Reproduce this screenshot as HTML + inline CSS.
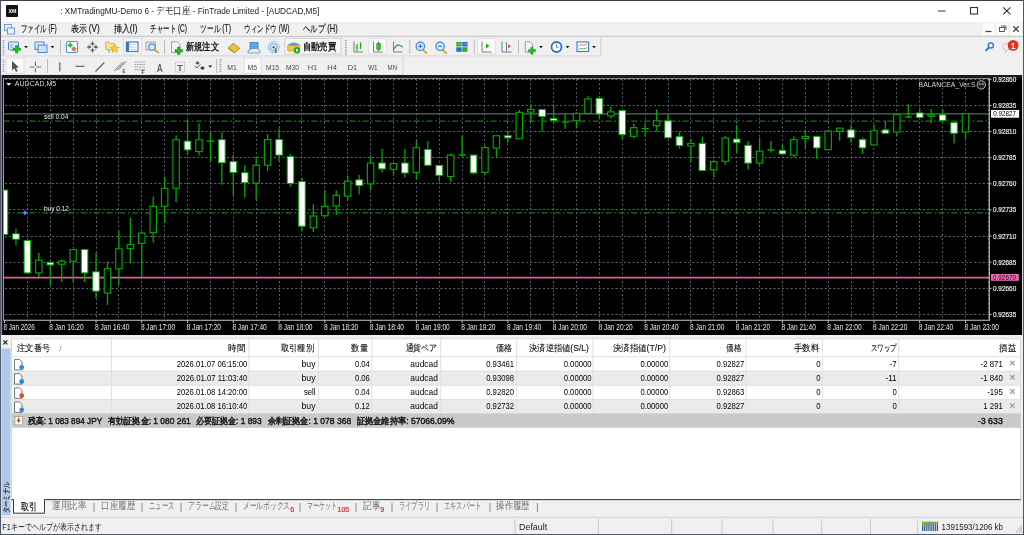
<!DOCTYPE html>
<html><head><meta charset="utf-8"><style>
html,body{margin:0;padding:0;width:1024px;height:535px;overflow:hidden;background:#f0f0f0;}
svg{display:block;font-family:"Liberation Sans", sans-serif;will-change:transform;}
</style></head><body>
<svg width="1024" height="535" viewBox="0 0 1024 535">
<rect x="0.00" y="0.00" width="1024.00" height="535.00" fill="#f0f0f0"/>
<rect x="0.00" y="0.00" width="1024.00" height="22.00" fill="#ffffff"/>
<line x1="0.00" y1="0.50" x2="1024.00" y2="0.50" stroke="#3c4048" stroke-width="1"/>
<rect x="6.00" y="5.00" width="12.00" height="12.00" fill="#111111" rx="1"/>
<text x="12.50" y="13.20" font-size="5.5" fill="#ffffff" text-anchor="middle" font-weight="bold" textLength="8.00" lengthAdjust="spacingAndGlyphs">XM</text>
<text x="60.30" y="14.30" font-size="9.6" fill="#1a1a1a" text-anchor="start" font-weight="normal" textLength="259.00" lengthAdjust="spacingAndGlyphs">: XMTradingMU-Demo 6 - デモ口座 - FinTrade Limited - [AUDCAD,M5]</text>
<line x1="938.00" y1="11.00" x2="945.50" y2="11.00" stroke="#333" stroke-width="1"/>
<rect x="970.50" y="7.50" width="7.00" height="6.50" fill="none" stroke="#333" stroke-width="1.1"/>
<line x1="1003.20" y1="7.30" x2="1010.50" y2="14.30" stroke="#333" stroke-width="1.1"/>
<line x1="1010.50" y1="7.30" x2="1003.20" y2="14.30" stroke="#333" stroke-width="1.1"/>
<rect x="1.00" y="22.00" width="1022.00" height="14.00" fill="#f0f0f0"/>
<rect x="4.50" y="24.50" width="7.00" height="6.00" fill="#eaf2fb" stroke="#5b8fd8" stroke-width="0.9"/>
<rect x="7.50" y="28.00" width="7.00" height="6.00" fill="#eaf2fb" stroke="#5b8fd8" stroke-width="0.9"/>
<text x="20.90" y="32.30" font-size="10.2" fill="#111111" text-anchor="start" font-weight="normal" textLength="35.90" lengthAdjust="spacingAndGlyphs" stroke="#111" stroke-width="0.15">ファイル (F)</text>
<text x="70.60" y="32.30" font-size="10.2" fill="#111111" text-anchor="start" font-weight="normal" textLength="29.10" lengthAdjust="spacingAndGlyphs" stroke="#111" stroke-width="0.15">表示 (V)</text>
<text x="113.50" y="32.30" font-size="10.2" fill="#111111" text-anchor="start" font-weight="normal" textLength="24.00" lengthAdjust="spacingAndGlyphs" stroke="#111" stroke-width="0.15">挿入(I)</text>
<text x="150.30" y="32.30" font-size="10.2" fill="#111111" text-anchor="start" font-weight="normal" textLength="36.70" lengthAdjust="spacingAndGlyphs" stroke="#111" stroke-width="0.15">チャート (C)</text>
<text x="200.40" y="32.30" font-size="10.2" fill="#111111" text-anchor="start" font-weight="normal" textLength="30.60" lengthAdjust="spacingAndGlyphs" stroke="#111" stroke-width="0.15">ツール (T)</text>
<text x="244.40" y="32.30" font-size="10.2" fill="#111111" text-anchor="start" font-weight="normal" textLength="45.10" lengthAdjust="spacingAndGlyphs" stroke="#111" stroke-width="0.15">ウィンドウ (W)</text>
<text x="302.90" y="32.30" font-size="10.2" fill="#111111" text-anchor="start" font-weight="normal" textLength="34.80" lengthAdjust="spacingAndGlyphs" stroke="#111" stroke-width="0.15">ヘルプ (H)</text>
<rect x="983.00" y="23.50" width="11.40" height="11.80" fill="#ffffff"/>
<rect x="996.60" y="23.50" width="11.40" height="11.80" fill="#ffffff"/>
<rect x="1010.50" y="23.50" width="11.00" height="11.80" fill="#ffffff"/>
<line x1="985.50" y1="31.50" x2="991.50" y2="31.50" stroke="#3a4a66" stroke-width="1.3"/>
<rect x="999.50" y="27.50" width="5.00" height="4.00" fill="none" stroke="#3a4a66" stroke-width="0.9"/>
<line x1="1001.00" y1="26.00" x2="1006.00" y2="26.00" stroke="#3a4a66" stroke-width="0.9"/>
<line x1="1006.00" y1="26.00" x2="1006.00" y2="30.00" stroke="#3a4a66" stroke-width="0.9"/>
<line x1="1013.30" y1="26.30" x2="1018.70" y2="31.70" stroke="#3a4a66" stroke-width="1.4"/>
<line x1="1018.70" y1="26.30" x2="1013.30" y2="31.70" stroke="#3a4a66" stroke-width="1.4"/>
<line x1="1.00" y1="36.30" x2="1023.00" y2="36.30" stroke="#c4c4c4" stroke-width="1"/>
<line x1="1.00" y1="55.90" x2="600.60" y2="55.90" stroke="#d6d6d6" stroke-width="1"/>
<line x1="600.60" y1="38.00" x2="600.60" y2="56.00" stroke="#d6d6d6" stroke-width="1"/>
<rect x="2.60" y="40.00" width="1.70" height="1.30" fill="#a0a0a0"/>
<rect x="2.60" y="42.30" width="1.70" height="1.30" fill="#a0a0a0"/>
<rect x="2.60" y="44.60" width="1.70" height="1.30" fill="#a0a0a0"/>
<rect x="2.60" y="46.90" width="1.70" height="1.30" fill="#a0a0a0"/>
<rect x="2.60" y="49.20" width="1.70" height="1.30" fill="#a0a0a0"/>
<rect x="2.60" y="51.50" width="1.70" height="1.30" fill="#a0a0a0"/>
<rect x="2.60" y="53.80" width="1.70" height="1.30" fill="#a0a0a0"/>
<rect x="8.50" y="42.00" width="10.00" height="8.00" fill="#dfeeff" stroke="#4f86cf" stroke-width="1" rx="1"/>
<line x1="10.00" y1="45.00" x2="13.00" y2="45.00" stroke="#6a8fc0" stroke-width="0.8"/>
<line x1="10.00" y1="47.00" x2="13.00" y2="47.00" stroke="#6a8fc0" stroke-width="0.8"/>
<path d="M15.5,45.5 h2.4 v2.6 h2.6 v2.4 h-2.6 v2.6 h-2.4 v-2.6 h-2.6 v-2.4 h2.6 z" fill="#22c022" stroke="#118811" stroke-width="0.5"/>
<path d="M24.2,46 h3.6 l-1.8,2.2 z" fill="#111111"/>
<rect x="35.00" y="42.00" width="9.00" height="7.50" fill="#e6f0fb" stroke="#4f86cf" stroke-width="1"/>
<rect x="38.00" y="45.00" width="9.00" height="7.50" fill="#cfe0f4" stroke="#4f86cf" stroke-width="1"/>
<path d="M50.7,46 h3.6 l-1.8,2.2 z" fill="#111111"/>
<line x1="60.40" y1="40.00" x2="60.40" y2="54.00" stroke="#bcbcbc" stroke-width="1"/>
<rect x="66.50" y="41.50" width="11.00" height="11.00" fill="#ffffff" stroke="#5b93d6" stroke-width="1.2" rx="1.5"/>
<path d="M70.2,42.8 l2.4,2.4 l-2.4,2.4 l-2.4,-2.4 z" fill="#3cbf3c" stroke="#1d8a1d" stroke-width="0.5"/>
<path d="M73.9,46.6 l2.4,2.4 l-2.4,2.4 l-2.4,-2.4 z" fill="#f2793a" stroke="#c04a10" stroke-width="0.5"/>
<path d="M92.5,42 L97.8,47 L92.5,52.2 L87.2,47 Z" fill="none" stroke="#8a8a8a" stroke-width="0.8"/>
<path d="M92.5,41.6 L93.8,44 L92.5,46.3 L91.2,44 Z M92.5,52.6 L93.8,50 L92.5,47.7 L91.2,50 Z M86.8,47 L89.4,45.7 L91.8,47 L89.4,48.3 Z M98.2,47 L95.6,45.7 L93.2,47 L95.6,48.3 Z" fill="#5e5e5e"/>
<rect x="108.30" y="49.00" width="1.60" height="3.80" fill="#b8b8b8"/>
<path d="M105.8,42.2 h3.6 l1,1.2 h3.8 v6.3 h-8.4 z" fill="#f7e68a" stroke="#c9a640" stroke-width="0.8"/>
<path d="M114.8,44.3 l1.25,2.7 l2.9,0.35 l-2.15,1.95 l0.6,2.85 l-2.6,-1.45 l-2.6,1.45 l0.6,-2.85 l-2.15,-1.95 l2.9,-0.35 z" fill="#f7d43a" stroke="#c99a10" stroke-width="0.6"/>
<rect x="123.50" y="38.20" width="18.10" height="15.80" fill="#f9f9f9" stroke="#dcdcdc" stroke-width="0.9"/>
<rect x="126.40" y="42.00" width="11.60" height="9.50" fill="#ffffff" stroke="#3b78c8" stroke-width="1.2"/>
<rect x="126.40" y="42.00" width="2.60" height="9.50" fill="#3b78c8"/>
<line x1="130.50" y1="44.50" x2="136.50" y2="44.50" stroke="#b0c8e8" stroke-width="0.8"/>
<line x1="130.50" y1="47.00" x2="136.50" y2="47.00" stroke="#b0c8e8" stroke-width="0.8"/>
<line x1="130.50" y1="49.50" x2="136.50" y2="49.50" stroke="#b0c8e8" stroke-width="0.8"/>
<rect x="129.50" y="43.80" width="1.00" height="1.00" fill="#e04040"/>
<rect x="129.50" y="46.30" width="1.00" height="1.00" fill="#e04040"/>
<rect x="146.00" y="42.00" width="9.50" height="8.00" fill="#ece8e0" stroke="#9a9a9a" stroke-width="0.8"/>
<circle cx="152.00" cy="47.00" r="3.20" fill="#d6e8fb" stroke="#5a90d0" stroke-width="1.2"/>
<line x1="154.30" y1="49.50" x2="158.80" y2="53.00" stroke="#d4a020" stroke-width="1.6"/>
<line x1="164.50" y1="40.00" x2="164.50" y2="54.00" stroke="#bcbcbc" stroke-width="1"/>
<path d="M171.5,41.8 h6 l2.5,2.5 v8.2 h-8.5 z" fill="#f4f4f4" stroke="#8a8a8a" stroke-width="0.8"/>
<path d="M177.6,47 h2.4 v2.6 h2.6 v2.4 h-2.6 v2.6 h-2.4 v-2.6 h-2.6 v-2.4 h2.6 z" fill="#22c022" stroke="#118811" stroke-width="0.5"/>
<text x="185.60" y="50.40" font-size="10.2" fill="#111111" text-anchor="start" font-weight="normal" textLength="33.40" lengthAdjust="spacingAndGlyphs" stroke="#111" stroke-width="0.35">新規注文</text>
<path d="M228.3,47.8 L233.2,43.3 L239.8,48.2 L234.8,52.6 Z" fill="#f0c23a" stroke="#9a7010" stroke-width="0.7"/>
<path d="M228.3,47.8 L234.8,52.6 L234.8,53.6 L228.3,48.9 Z" fill="#b8860b"/>
<rect x="250.00" y="42.50" width="8.00" height="7.00" fill="#5aa8ea" stroke="#2c78c0" stroke-width="0.7"/>
<path d="M248,53 q-1,-3 2,-3 q1,-2 4,-1.5 q3,-1 5,1.5 q2,0 1,3 z" fill="#e4eef8" stroke="#6a8aaa" stroke-width="0.8"/>
<circle cx="273.70" cy="47.30" r="5.50" fill="none" stroke="#9ab8d8" stroke-width="1"/>
<circle cx="273.70" cy="47.30" r="3.50" fill="none" stroke="#7aa0c8" stroke-width="1"/>
<circle cx="273.70" cy="47.30" r="1.30" fill="#3a78c0"/>
<line x1="275.70" y1="48.30" x2="275.70" y2="53.00" stroke="#2aa02a" stroke-width="1.6"/>
<rect x="285.00" y="38.20" width="56.00" height="15.80" fill="#f7f7f7" stroke="#c9c9c9" stroke-width="0.9"/>
<path d="M287.8,45 q6,-4 12,0 v6 h-12 z" fill="#f2c640" stroke="#b08a10" stroke-width="0.6"/>
<path d="M287.8,45 q6,-5 12,0 q-6,2 -12,0 z" fill="#5aa0dc"/>
<circle cx="297.00" cy="50.30" r="3.20" fill="#22aa22"/>
<path d="M296,48.5 l2.6,1.8 l-2.6,1.8 z" fill="#ffffff"/>
<text x="302.60" y="50.40" font-size="10.2" fill="#111111" text-anchor="start" font-weight="normal" textLength="33.40" lengthAdjust="spacingAndGlyphs" stroke="#111" stroke-width="0.35">自動売買</text>
<rect x="345.00" y="40.00" width="1.70" height="1.30" fill="#a0a0a0"/>
<rect x="345.00" y="42.30" width="1.70" height="1.30" fill="#a0a0a0"/>
<rect x="345.00" y="44.60" width="1.70" height="1.30" fill="#a0a0a0"/>
<rect x="345.00" y="46.90" width="1.70" height="1.30" fill="#a0a0a0"/>
<rect x="345.00" y="49.20" width="1.70" height="1.30" fill="#a0a0a0"/>
<rect x="345.00" y="51.50" width="1.70" height="1.30" fill="#a0a0a0"/>
<rect x="345.00" y="53.80" width="1.70" height="1.30" fill="#a0a0a0"/>
<path d="M354,41.5 v10.5 h9" fill="none" stroke="#707070" stroke-width="0.9"/>
<line x1="357.00" y1="44.00" x2="357.00" y2="51.00" stroke="#22a022" stroke-width="1.2"/>
<line x1="360.50" y1="42.50" x2="360.50" y2="49.00" stroke="#22a022" stroke-width="1.2"/>
<line x1="356.00" y1="47.00" x2="357.00" y2="47.00" stroke="#22a022" stroke-width="1"/>
<line x1="360.50" y1="45.00" x2="361.50" y2="45.00" stroke="#22a022" stroke-width="1"/>
<rect x="368.80" y="38.20" width="17.60" height="15.80" fill="#f9f9f9" stroke="#dcdcdc" stroke-width="0.9"/>
<path d="M373.5,41.5 v10.5 h9" fill="none" stroke="#707070" stroke-width="0.9"/>
<line x1="378.50" y1="41.50" x2="378.50" y2="51.00" stroke="#1a8a1a" stroke-width="0.9"/>
<rect x="376.80" y="43.50" width="3.50" height="6.00" fill="#30c030" stroke="#1a8a1a" stroke-width="0.6"/>
<path d="M393.5,41.5 v10.5 h9" fill="none" stroke="#707070" stroke-width="0.9"/>
<path d="M394,49 q3,-5 5,-4 t4,2" fill="none" stroke="#22a022" stroke-width="1.1"/>
<line x1="409.80" y1="40.00" x2="409.80" y2="54.00" stroke="#bcbcbc" stroke-width="1"/>
<line x1="422.50" y1="49.30" x2="426.80" y2="53.50" stroke="#d8a820" stroke-width="1.8"/>
<circle cx="420.30" cy="46.30" r="4.20" fill="#dcecfc" stroke="#3a80d0" stroke-width="1.2"/>
<line x1="418.30" y1="46.30" x2="422.30" y2="46.30" stroke="#2a6ac0" stroke-width="1.1"/>
<line x1="420.30" y1="44.30" x2="420.30" y2="48.30" stroke="#2a6ac0" stroke-width="1.1"/>
<line x1="442.30" y1="49.30" x2="446.60" y2="53.50" stroke="#d8a820" stroke-width="1.8"/>
<circle cx="440.10" cy="46.30" r="4.20" fill="#dcecfc" stroke="#3a80d0" stroke-width="1.2"/>
<line x1="438.10" y1="46.30" x2="442.10" y2="46.30" stroke="#2a6ac0" stroke-width="1.1"/>
<rect x="456.30" y="42.00" width="5.30" height="4.50" fill="#34a834"/>
<rect x="462.20" y="42.00" width="5.30" height="4.50" fill="#2a6acc"/>
<rect x="456.30" y="47.30" width="5.30" height="4.50" fill="#2a6acc"/>
<rect x="462.20" y="47.30" width="5.30" height="4.50" fill="#34a834"/>
<line x1="457.50" y1="44.00" x2="460.50" y2="44.00" stroke="#d8f0d8" stroke-width="0.6"/>
<line x1="463.50" y1="44.00" x2="466.50" y2="44.00" stroke="#d8e8f8" stroke-width="0.6"/>
<line x1="474.30" y1="40.00" x2="474.30" y2="54.00" stroke="#bcbcbc" stroke-width="1"/>
<rect x="477.50" y="38.20" width="17.80" height="15.80" fill="#f9f9f9" stroke="#dcdcdc" stroke-width="0.9"/>
<path d="M482,41.5 v10.5 h9.5" fill="none" stroke="#707070" stroke-width="0.9"/>
<path d="M486,43.5 l3.5,2.5 l-3.5,2.5 z" fill="#22aa22"/>
<path d="M502,41.5 v10.5 h9.5" fill="none" stroke="#707070" stroke-width="0.9"/>
<line x1="506.50" y1="42.00" x2="506.50" y2="51.00" stroke="#3a78c0" stroke-width="0.9"/>
<path d="M508,44.3 l3,2 l-3,2 z" fill="#e05030"/>
<line x1="518.50" y1="40.00" x2="518.50" y2="54.00" stroke="#bcbcbc" stroke-width="1"/>
<path d="M525.3,41.8 h5 l2.3,2.3 v8 h-7.3 z" fill="#f4f4f4" stroke="#8a8a8a" stroke-width="0.8"/>
<path d="M530.8,47.2 h2.2 v2.4 h2.4 v2.2 h-2.4 v2.4 h-2.2 v-2.4 h-2.4 v-2.2 h2.4 z" fill="#22c022" stroke="#118811" stroke-width="0.5"/>
<path d="M539.2,46 h3.6 l-1.8,2.2 z" fill="#111111"/>
<circle cx="556.50" cy="47.00" r="5.00" fill="#ffffff" stroke="#2a70c8" stroke-width="1.8"/>
<line x1="556.50" y1="47.00" x2="556.50" y2="44.50" stroke="#333" stroke-width="0.7"/>
<line x1="556.50" y1="47.00" x2="558.50" y2="47.50" stroke="#333" stroke-width="0.7"/>
<path d="M565.8000000000001,46 h3.6 l-1.8,2.2 z" fill="#111111"/>
<rect x="577.00" y="42.00" width="11.60" height="9.50" fill="#ffffff" stroke="#3b78c8" stroke-width="1.1"/>
<path d="M578.5,46 l2.5,-1.5 l2.5,0.8 l3.5,-1.5" fill="none" stroke="#d06030" stroke-width="0.8"/>
<path d="M578.5,49.5 l2.5,-1.2 l2.5,0.8 l3.5,-1.2" fill="none" stroke="#40a040" stroke-width="0.8"/>
<path d="M592.2,46 h3.6 l-1.8,2.2 z" fill="#111111"/>
<circle cx="990.80" cy="45.40" r="2.60" fill="none" stroke="#2f6fd0" stroke-width="1.3"/>
<line x1="988.80" y1="47.60" x2="985.50" y2="50.80" stroke="#2f6fd0" stroke-width="1.8"/>
<path d="M1002.8,46.5 q0,-3 5,-3 q5,0 5,3 q0,3 -5,3 l-2.5,3 l0.5,-3 q-3,-0.5 -3,-3 z" fill="#f2f2f2" stroke="#b8b8b8" stroke-width="0.8"/>
<circle cx="1013.10" cy="45.40" r="5.40" fill="#e0301e"/>
<text x="1013.10" y="48.60" font-size="8.5" fill="#ffffff" text-anchor="middle" font-weight="bold">1</text>
<line x1="1.00" y1="75.00" x2="403.00" y2="75.00" stroke="#d6d6d6" stroke-width="1"/>
<line x1="403.00" y1="57.00" x2="403.00" y2="75.00" stroke="#d6d6d6" stroke-width="1"/>
<rect x="2.60" y="59.30" width="1.70" height="1.30" fill="#a0a0a0"/>
<rect x="2.60" y="61.60" width="1.70" height="1.30" fill="#a0a0a0"/>
<rect x="2.60" y="63.90" width="1.70" height="1.30" fill="#a0a0a0"/>
<rect x="2.60" y="66.20" width="1.70" height="1.30" fill="#a0a0a0"/>
<rect x="2.60" y="68.50" width="1.70" height="1.30" fill="#a0a0a0"/>
<rect x="2.60" y="70.80" width="1.70" height="1.30" fill="#a0a0a0"/>
<rect x="6.30" y="58.00" width="17.70" height="15.30" fill="#f9f9f9" stroke="#dcdcdc" stroke-width="0.9"/>
<path d="M12,61 L12,70.5 L14.3,68.3 L16,72 L17.6,71.2 L16,67.8 L19,67.5 Z" fill="#505050"/>
<line x1="29.90" y1="67.00" x2="41.00" y2="67.00" stroke="#6a6a6a" stroke-width="1"/>
<line x1="35.40" y1="61.80" x2="35.40" y2="72.20" stroke="#6a6a6a" stroke-width="1"/>
<rect x="34.40" y="66.00" width="2.00" height="2.00" fill="#f0f0f0"/>
<line x1="47.50" y1="59.00" x2="47.50" y2="73.00" stroke="#bcbcbc" stroke-width="1"/>
<line x1="59.80" y1="62.20" x2="59.80" y2="71.60" stroke="#606060" stroke-width="1.2"/>
<line x1="75.60" y1="66.30" x2="84.40" y2="66.30" stroke="#606060" stroke-width="1.2"/>
<line x1="95.50" y1="71.50" x2="104.30" y2="62.50" stroke="#606060" stroke-width="1.1"/>
<line x1="114.30" y1="71.00" x2="122.00" y2="62.50" stroke="#707070" stroke-width="0.8"/>
<line x1="116.50" y1="70.34" x2="124.20" y2="61.84" stroke="#707070" stroke-width="0.8"/>
<line x1="118.70" y1="69.68" x2="126.40" y2="61.18" stroke="#707070" stroke-width="0.8"/>
<text x="122.50" y="73.00" font-size="4.5" fill="#444" text-anchor="start" font-weight="bold">E</text>
<line x1="134.60" y1="62.00" x2="145.00" y2="62.00" stroke="#8a8a8a" stroke-width="0.8" stroke-dasharray="1.5 0.7"/>
<line x1="134.60" y1="64.50" x2="145.00" y2="64.50" stroke="#8a8a8a" stroke-width="0.8" stroke-dasharray="1.5 0.7"/>
<line x1="134.60" y1="67.00" x2="145.00" y2="67.00" stroke="#8a8a8a" stroke-width="0.8" stroke-dasharray="1.5 0.7"/>
<line x1="134.60" y1="69.50" x2="145.00" y2="69.50" stroke="#8a8a8a" stroke-width="0.8" stroke-dasharray="1.5 0.7"/>
<text x="141.50" y="73.50" font-size="5" fill="#444" text-anchor="start" font-weight="bold">F</text>
<text x="159.80" y="71.50" font-size="10" fill="#666666" text-anchor="middle" font-weight="bold" textLength="6.00" lengthAdjust="spacingAndGlyphs">A</text>
<rect x="175.50" y="62.00" width="9.00" height="10.00" fill="none" stroke="#999" stroke-width="0.7" stroke-dasharray="1 0.8"/>
<text x="180.00" y="70.60" font-size="9" fill="#666666" text-anchor="middle" font-weight="bold" textLength="6.00" lengthAdjust="spacingAndGlyphs">T</text>
<path d="M195.5,63 l2,-1.8 l2,1.8 l-2,1.8 z" fill="#444"/>
<path d="M200,68 l2.5,-2 l2.5,2 l-2.5,2 z" fill="#444"/>
<path d="M195,66 l1.8,2 l3.5,-3.5" fill="none" stroke="#444" stroke-width="0.9"/>
<path d="M208.39999999999998,65.5 h3.6 l-1.8,2.2 z" fill="#111111"/>
<line x1="216.70" y1="59.00" x2="216.70" y2="73.00" stroke="#bcbcbc" stroke-width="1"/>
<rect x="219.60" y="59.30" width="1.70" height="1.30" fill="#a0a0a0"/>
<rect x="219.60" y="61.60" width="1.70" height="1.30" fill="#a0a0a0"/>
<rect x="219.60" y="63.90" width="1.70" height="1.30" fill="#a0a0a0"/>
<rect x="219.60" y="66.20" width="1.70" height="1.30" fill="#a0a0a0"/>
<rect x="219.60" y="68.50" width="1.70" height="1.30" fill="#a0a0a0"/>
<rect x="219.60" y="70.80" width="1.70" height="1.30" fill="#a0a0a0"/>
<rect x="244.00" y="58.00" width="17.20" height="15.30" fill="#f9f9f9" stroke="#dcdcdc" stroke-width="0.9"/>
<text x="232.00" y="69.60" font-size="7.6" fill="#4a4a4a" text-anchor="middle" font-weight="normal" textLength="9.50" lengthAdjust="spacingAndGlyphs">M1</text>
<text x="252.30" y="69.60" font-size="7.6" fill="#4a4a4a" text-anchor="middle" font-weight="normal" textLength="9.50" lengthAdjust="spacingAndGlyphs">M5</text>
<text x="272.60" y="69.60" font-size="7.6" fill="#4a4a4a" text-anchor="middle" font-weight="normal" textLength="13.00" lengthAdjust="spacingAndGlyphs">M15</text>
<text x="292.40" y="69.60" font-size="7.6" fill="#4a4a4a" text-anchor="middle" font-weight="normal" textLength="13.00" lengthAdjust="spacingAndGlyphs">M30</text>
<text x="312.40" y="69.60" font-size="7.6" fill="#4a4a4a" text-anchor="middle" font-weight="normal" textLength="9.50" lengthAdjust="spacingAndGlyphs">H1</text>
<text x="332.10" y="69.60" font-size="7.6" fill="#4a4a4a" text-anchor="middle" font-weight="normal" textLength="9.50" lengthAdjust="spacingAndGlyphs">H4</text>
<text x="352.50" y="69.60" font-size="7.6" fill="#4a4a4a" text-anchor="middle" font-weight="normal" textLength="9.50" lengthAdjust="spacingAndGlyphs">D1</text>
<text x="372.90" y="69.60" font-size="7.6" fill="#4a4a4a" text-anchor="middle" font-weight="normal" textLength="9.50" lengthAdjust="spacingAndGlyphs">W1</text>
<text x="392.30" y="69.60" font-size="7.6" fill="#4a4a4a" text-anchor="middle" font-weight="normal" textLength="9.50" lengthAdjust="spacingAndGlyphs">MN</text>
<rect x="1.00" y="75.00" width="1021.00" height="260.00" fill="#000000"/>
<line x1="1022.50" y1="75.00" x2="1022.50" y2="335.00" stroke="#dcdcdc" stroke-width="1"/>
<line x1="1.50" y1="75.00" x2="1.50" y2="335.00" stroke="#8a8a8a" stroke-width="1"/>
<rect x="2.00" y="75.00" width="1020.00" height="3.30" fill="#1a1a1a"/>
<rect x="2.00" y="75.00" width="1.30" height="260.00" fill="#1c1c1c"/>
<line x1="3.00" y1="78.50" x2="989.50" y2="78.50" stroke="#8c8c8c" stroke-width="1"/>
<line x1="3.50" y1="78.00" x2="3.50" y2="320.50" stroke="#9a9a9a" stroke-width="1"/>
<line x1="4.85" y1="79.50" x2="988.50" y2="79.50" stroke="#56646f" stroke-width="1" stroke-dasharray="2.2 2.07"/>
<line x1="4.85" y1="105.50" x2="988.50" y2="105.50" stroke="#56646f" stroke-width="1" stroke-dasharray="2.2 2.07"/>
<line x1="4.85" y1="131.50" x2="988.50" y2="131.50" stroke="#56646f" stroke-width="1" stroke-dasharray="2.2 2.07"/>
<line x1="4.85" y1="157.50" x2="988.50" y2="157.50" stroke="#56646f" stroke-width="1" stroke-dasharray="2.2 2.07"/>
<line x1="4.85" y1="183.50" x2="988.50" y2="183.50" stroke="#56646f" stroke-width="1" stroke-dasharray="2.2 2.07"/>
<line x1="4.85" y1="209.50" x2="988.50" y2="209.50" stroke="#56646f" stroke-width="1" stroke-dasharray="2.2 2.07"/>
<line x1="4.85" y1="236.50" x2="988.50" y2="236.50" stroke="#56646f" stroke-width="1" stroke-dasharray="2.2 2.07"/>
<line x1="4.85" y1="262.50" x2="988.50" y2="262.50" stroke="#56646f" stroke-width="1" stroke-dasharray="2.2 2.07"/>
<line x1="4.85" y1="288.50" x2="988.50" y2="288.50" stroke="#56646f" stroke-width="1" stroke-dasharray="2.2 2.07"/>
<line x1="4.85" y1="314.50" x2="988.50" y2="314.50" stroke="#56646f" stroke-width="1" stroke-dasharray="2.2 2.07"/>
<line x1="27.50" y1="79.00" x2="27.50" y2="320.00" stroke="#56646f" stroke-width="1" stroke-dasharray="1.9 2.4"/>
<line x1="50.50" y1="79.00" x2="50.50" y2="320.00" stroke="#56646f" stroke-width="1" stroke-dasharray="1.9 2.4"/>
<line x1="73.50" y1="79.00" x2="73.50" y2="320.00" stroke="#56646f" stroke-width="1" stroke-dasharray="1.9 2.4"/>
<line x1="96.50" y1="79.00" x2="96.50" y2="320.00" stroke="#56646f" stroke-width="1" stroke-dasharray="1.9 2.4"/>
<line x1="118.50" y1="79.00" x2="118.50" y2="320.00" stroke="#56646f" stroke-width="1" stroke-dasharray="1.9 2.4"/>
<line x1="141.50" y1="79.00" x2="141.50" y2="320.00" stroke="#56646f" stroke-width="1" stroke-dasharray="1.9 2.4"/>
<line x1="164.50" y1="79.00" x2="164.50" y2="320.00" stroke="#56646f" stroke-width="1" stroke-dasharray="1.9 2.4"/>
<line x1="187.50" y1="79.00" x2="187.50" y2="320.00" stroke="#56646f" stroke-width="1" stroke-dasharray="1.9 2.4"/>
<line x1="210.50" y1="79.00" x2="210.50" y2="320.00" stroke="#56646f" stroke-width="1" stroke-dasharray="1.9 2.4"/>
<line x1="233.50" y1="79.00" x2="233.50" y2="320.00" stroke="#56646f" stroke-width="1" stroke-dasharray="1.9 2.4"/>
<line x1="256.50" y1="79.00" x2="256.50" y2="320.00" stroke="#56646f" stroke-width="1" stroke-dasharray="1.9 2.4"/>
<line x1="279.50" y1="79.00" x2="279.50" y2="320.00" stroke="#56646f" stroke-width="1" stroke-dasharray="1.9 2.4"/>
<line x1="301.50" y1="79.00" x2="301.50" y2="320.00" stroke="#56646f" stroke-width="1" stroke-dasharray="1.9 2.4"/>
<line x1="324.50" y1="79.00" x2="324.50" y2="320.00" stroke="#56646f" stroke-width="1" stroke-dasharray="1.9 2.4"/>
<line x1="347.50" y1="79.00" x2="347.50" y2="320.00" stroke="#56646f" stroke-width="1" stroke-dasharray="1.9 2.4"/>
<line x1="370.50" y1="79.00" x2="370.50" y2="320.00" stroke="#56646f" stroke-width="1" stroke-dasharray="1.9 2.4"/>
<line x1="393.50" y1="79.00" x2="393.50" y2="320.00" stroke="#56646f" stroke-width="1" stroke-dasharray="1.9 2.4"/>
<line x1="416.50" y1="79.00" x2="416.50" y2="320.00" stroke="#56646f" stroke-width="1" stroke-dasharray="1.9 2.4"/>
<line x1="439.50" y1="79.00" x2="439.50" y2="320.00" stroke="#56646f" stroke-width="1" stroke-dasharray="1.9 2.4"/>
<line x1="462.50" y1="79.00" x2="462.50" y2="320.00" stroke="#56646f" stroke-width="1" stroke-dasharray="1.9 2.4"/>
<line x1="484.50" y1="79.00" x2="484.50" y2="320.00" stroke="#56646f" stroke-width="1" stroke-dasharray="1.9 2.4"/>
<line x1="507.50" y1="79.00" x2="507.50" y2="320.00" stroke="#56646f" stroke-width="1" stroke-dasharray="1.9 2.4"/>
<line x1="530.50" y1="79.00" x2="530.50" y2="320.00" stroke="#56646f" stroke-width="1" stroke-dasharray="1.9 2.4"/>
<line x1="553.50" y1="79.00" x2="553.50" y2="320.00" stroke="#56646f" stroke-width="1" stroke-dasharray="1.9 2.4"/>
<line x1="576.50" y1="79.00" x2="576.50" y2="320.00" stroke="#56646f" stroke-width="1" stroke-dasharray="1.9 2.4"/>
<line x1="599.50" y1="79.00" x2="599.50" y2="320.00" stroke="#56646f" stroke-width="1" stroke-dasharray="1.9 2.4"/>
<line x1="622.50" y1="79.00" x2="622.50" y2="320.00" stroke="#56646f" stroke-width="1" stroke-dasharray="1.9 2.4"/>
<line x1="645.50" y1="79.00" x2="645.50" y2="320.00" stroke="#56646f" stroke-width="1" stroke-dasharray="1.9 2.4"/>
<line x1="668.50" y1="79.00" x2="668.50" y2="320.00" stroke="#56646f" stroke-width="1" stroke-dasharray="1.9 2.4"/>
<line x1="690.50" y1="79.00" x2="690.50" y2="320.00" stroke="#56646f" stroke-width="1" stroke-dasharray="1.9 2.4"/>
<line x1="713.50" y1="79.00" x2="713.50" y2="320.00" stroke="#56646f" stroke-width="1" stroke-dasharray="1.9 2.4"/>
<line x1="736.50" y1="79.00" x2="736.50" y2="320.00" stroke="#56646f" stroke-width="1" stroke-dasharray="1.9 2.4"/>
<line x1="759.50" y1="79.00" x2="759.50" y2="320.00" stroke="#56646f" stroke-width="1" stroke-dasharray="1.9 2.4"/>
<line x1="782.50" y1="79.00" x2="782.50" y2="320.00" stroke="#56646f" stroke-width="1" stroke-dasharray="1.9 2.4"/>
<line x1="805.50" y1="79.00" x2="805.50" y2="320.00" stroke="#56646f" stroke-width="1" stroke-dasharray="1.9 2.4"/>
<line x1="828.50" y1="79.00" x2="828.50" y2="320.00" stroke="#56646f" stroke-width="1" stroke-dasharray="1.9 2.4"/>
<line x1="851.50" y1="79.00" x2="851.50" y2="320.00" stroke="#56646f" stroke-width="1" stroke-dasharray="1.9 2.4"/>
<line x1="873.50" y1="79.00" x2="873.50" y2="320.00" stroke="#56646f" stroke-width="1" stroke-dasharray="1.9 2.4"/>
<line x1="896.50" y1="79.00" x2="896.50" y2="320.00" stroke="#56646f" stroke-width="1" stroke-dasharray="1.9 2.4"/>
<line x1="919.50" y1="79.00" x2="919.50" y2="320.00" stroke="#56646f" stroke-width="1" stroke-dasharray="1.9 2.4"/>
<line x1="942.50" y1="79.00" x2="942.50" y2="320.00" stroke="#56646f" stroke-width="1" stroke-dasharray="1.9 2.4"/>
<line x1="965.50" y1="79.00" x2="965.50" y2="320.00" stroke="#56646f" stroke-width="1" stroke-dasharray="1.9 2.4"/>
<line x1="988.50" y1="79.00" x2="988.50" y2="320.00" stroke="#56646f" stroke-width="1" stroke-dasharray="1.9 2.4"/>
<clipPath id="cp"><rect x="4" y="78.5" width="985" height="241.5"/></clipPath>
<g clip-path="url(#cp)">
<line x1="4.00" y1="113.90" x2="989.00" y2="113.90" stroke="#5c6670" stroke-width="1.3"/>
<line x1="4.00" y1="121.10" x2="989.00" y2="121.10" stroke="#147a14" stroke-width="1.3" stroke-dasharray="6 2.6 1.6 2.6" stroke-dashoffset="0"/>
<line x1="4.00" y1="212.90" x2="989.00" y2="212.90" stroke="#147a14" stroke-width="1.3" stroke-dasharray="6 2.6 1.6 2.6"/>
<line x1="4.00" y1="277.60" x2="989.00" y2="277.60" stroke="#d8609c" stroke-width="1.6"/>
<rect x="1.20" y="190.00" width="6.60" height="44.40" fill="#ffffff" stroke="#00a800" stroke-width="1.0"/>
<line x1="15.94" y1="228.60" x2="15.94" y2="233.70" stroke="#00a800" stroke-width="1.3"/>
<line x1="15.94" y1="239.30" x2="15.94" y2="245.00" stroke="#00a800" stroke-width="1.3"/>
<rect x="12.64" y="233.80" width="6.60" height="5.40" fill="#ffffff" stroke="#00a800" stroke-width="1.0"/>
<rect x="24.08" y="240.50" width="6.60" height="32.40" fill="#ffffff" stroke="#00a800" stroke-width="1.0"/>
<line x1="38.82" y1="252.80" x2="38.82" y2="260.00" stroke="#00a800" stroke-width="1.3"/>
<line x1="38.82" y1="273.00" x2="38.82" y2="277.00" stroke="#00a800" stroke-width="1.3"/>
<rect x="35.62" y="260.15" width="6.40" height="12.70" fill="#000000" stroke="#00a800" stroke-width="1.15"/>
<line x1="50.26" y1="262.00" x2="50.26" y2="262.20" stroke="#00a800" stroke-width="1.3"/>
<line x1="50.26" y1="265.00" x2="50.26" y2="285.30" stroke="#00a800" stroke-width="1.3"/>
<rect x="46.96" y="262.30" width="6.60" height="2.60" fill="#ffffff" stroke="#00a800" stroke-width="1.0"/>
<line x1="61.70" y1="259.00" x2="61.70" y2="260.90" stroke="#00a800" stroke-width="1.3"/>
<line x1="61.70" y1="264.40" x2="61.70" y2="282.00" stroke="#00a800" stroke-width="1.3"/>
<rect x="58.50" y="261.05" width="6.40" height="3.20" fill="#000000" stroke="#00a800" stroke-width="1.15"/>
<line x1="73.14" y1="249.00" x2="73.14" y2="249.40" stroke="#00a800" stroke-width="1.3"/>
<line x1="73.14" y1="261.30" x2="73.14" y2="282.00" stroke="#00a800" stroke-width="1.3"/>
<rect x="69.94" y="249.55" width="6.40" height="11.60" fill="#000000" stroke="#00a800" stroke-width="1.15"/>
<line x1="84.58" y1="249.00" x2="84.58" y2="249.40" stroke="#00a800" stroke-width="1.3"/>
<line x1="84.58" y1="273.00" x2="84.58" y2="282.00" stroke="#00a800" stroke-width="1.3"/>
<rect x="81.28" y="249.50" width="6.60" height="23.40" fill="#ffffff" stroke="#00a800" stroke-width="1.0"/>
<line x1="96.02" y1="252.80" x2="96.02" y2="271.70" stroke="#00a800" stroke-width="1.3"/>
<line x1="96.02" y1="291.20" x2="96.02" y2="298.20" stroke="#00a800" stroke-width="1.3"/>
<rect x="92.72" y="271.80" width="6.60" height="19.30" fill="#ffffff" stroke="#00a800" stroke-width="1.0"/>
<line x1="107.46" y1="261.30" x2="107.46" y2="268.60" stroke="#00a800" stroke-width="1.3"/>
<line x1="107.46" y1="293.30" x2="107.46" y2="305.00" stroke="#00a800" stroke-width="1.3"/>
<rect x="104.26" y="268.75" width="6.40" height="24.40" fill="#000000" stroke="#00a800" stroke-width="1.15"/>
<line x1="118.90" y1="231.00" x2="118.90" y2="248.70" stroke="#00a800" stroke-width="1.3"/>
<line x1="118.90" y1="269.00" x2="118.90" y2="284.90" stroke="#00a800" stroke-width="1.3"/>
<rect x="115.70" y="248.85" width="6.40" height="20.00" fill="#000000" stroke="#00a800" stroke-width="1.15"/>
<line x1="130.34" y1="217.60" x2="130.34" y2="244.30" stroke="#00a800" stroke-width="1.3"/>
<line x1="130.34" y1="248.70" x2="130.34" y2="263.30" stroke="#00a800" stroke-width="1.3"/>
<rect x="127.14" y="244.45" width="6.40" height="4.10" fill="#000000" stroke="#00a800" stroke-width="1.15"/>
<line x1="141.78" y1="231.70" x2="141.78" y2="232.90" stroke="#00a800" stroke-width="1.3"/>
<line x1="141.78" y1="243.60" x2="141.78" y2="277.00" stroke="#00a800" stroke-width="1.3"/>
<rect x="138.58" y="233.05" width="6.40" height="10.40" fill="#000000" stroke="#00a800" stroke-width="1.15"/>
<line x1="153.22" y1="196.50" x2="153.22" y2="206.20" stroke="#00a800" stroke-width="1.3"/>
<line x1="153.22" y1="232.90" x2="153.22" y2="242.60" stroke="#00a800" stroke-width="1.3"/>
<rect x="150.02" y="206.35" width="6.40" height="26.40" fill="#000000" stroke="#00a800" stroke-width="1.15"/>
<line x1="164.66" y1="176.70" x2="164.66" y2="188.20" stroke="#00a800" stroke-width="1.3"/>
<line x1="164.66" y1="206.40" x2="164.66" y2="222.90" stroke="#00a800" stroke-width="1.3"/>
<rect x="161.46" y="188.35" width="6.40" height="17.90" fill="#000000" stroke="#00a800" stroke-width="1.15"/>
<line x1="176.10" y1="135.50" x2="176.10" y2="139.60" stroke="#00a800" stroke-width="1.3"/>
<line x1="176.10" y1="188.40" x2="176.10" y2="202.20" stroke="#00a800" stroke-width="1.3"/>
<rect x="172.90" y="139.75" width="6.40" height="48.50" fill="#000000" stroke="#00a800" stroke-width="1.15"/>
<line x1="187.54" y1="120.20" x2="187.54" y2="141.00" stroke="#00a800" stroke-width="1.3"/>
<line x1="187.54" y1="150.00" x2="187.54" y2="154.90" stroke="#00a800" stroke-width="1.3"/>
<rect x="184.24" y="141.10" width="6.60" height="8.80" fill="#ffffff" stroke="#00a800" stroke-width="1.0"/>
<line x1="198.98" y1="123.30" x2="198.98" y2="139.60" stroke="#00a800" stroke-width="1.3"/>
<line x1="198.98" y1="151.70" x2="198.98" y2="155.60" stroke="#00a800" stroke-width="1.3"/>
<rect x="195.78" y="139.75" width="6.40" height="11.80" fill="#000000" stroke="#00a800" stroke-width="1.15"/>
<line x1="210.42" y1="132.30" x2="210.42" y2="141.00" stroke="#00a800" stroke-width="1.3"/>
<line x1="210.42" y1="141.00" x2="210.42" y2="161.50" stroke="#00a800" stroke-width="1.3"/>
<line x1="206.82" y1="141.00" x2="214.02" y2="141.00" stroke="#00a800" stroke-width="1.3"/>
<line x1="221.86" y1="132.30" x2="221.86" y2="139.60" stroke="#00a800" stroke-width="1.3"/>
<line x1="221.86" y1="162.90" x2="221.86" y2="184.80" stroke="#00a800" stroke-width="1.3"/>
<rect x="218.56" y="139.70" width="6.60" height="23.10" fill="#ffffff" stroke="#00a800" stroke-width="1.0"/>
<line x1="233.30" y1="154.90" x2="233.30" y2="161.50" stroke="#00a800" stroke-width="1.3"/>
<line x1="233.30" y1="172.60" x2="233.30" y2="195.00" stroke="#00a800" stroke-width="1.3"/>
<rect x="230.00" y="161.60" width="6.60" height="10.90" fill="#ffffff" stroke="#00a800" stroke-width="1.0"/>
<line x1="244.74" y1="165.30" x2="244.74" y2="172.60" stroke="#00a800" stroke-width="1.3"/>
<line x1="244.74" y1="182.80" x2="244.74" y2="197.40" stroke="#00a800" stroke-width="1.3"/>
<rect x="241.44" y="172.70" width="6.60" height="10.00" fill="#ffffff" stroke="#00a800" stroke-width="1.0"/>
<line x1="256.18" y1="156.20" x2="256.18" y2="165.10" stroke="#00a800" stroke-width="1.3"/>
<line x1="256.18" y1="183.20" x2="256.18" y2="199.70" stroke="#00a800" stroke-width="1.3"/>
<rect x="252.98" y="165.25" width="6.40" height="17.80" fill="#000000" stroke="#00a800" stroke-width="1.15"/>
<line x1="267.62" y1="134.00" x2="267.62" y2="139.40" stroke="#00a800" stroke-width="1.3"/>
<line x1="267.62" y1="165.40" x2="267.62" y2="171.00" stroke="#00a800" stroke-width="1.3"/>
<rect x="264.42" y="139.55" width="6.40" height="25.70" fill="#000000" stroke="#00a800" stroke-width="1.15"/>
<line x1="279.06" y1="128.50" x2="279.06" y2="139.40" stroke="#00a800" stroke-width="1.3"/>
<line x1="279.06" y1="155.20" x2="279.06" y2="161.30" stroke="#00a800" stroke-width="1.3"/>
<rect x="275.76" y="139.50" width="6.60" height="15.60" fill="#ffffff" stroke="#00a800" stroke-width="1.0"/>
<line x1="290.50" y1="154.00" x2="290.50" y2="156.40" stroke="#00a800" stroke-width="1.3"/>
<line x1="290.50" y1="183.60" x2="290.50" y2="186.70" stroke="#00a800" stroke-width="1.3"/>
<rect x="287.20" y="156.50" width="6.60" height="27.00" fill="#ffffff" stroke="#00a800" stroke-width="1.0"/>
<line x1="301.94" y1="177.80" x2="301.94" y2="181.40" stroke="#00a800" stroke-width="1.3"/>
<line x1="301.94" y1="226.30" x2="301.94" y2="231.20" stroke="#00a800" stroke-width="1.3"/>
<rect x="298.64" y="181.50" width="6.60" height="44.70" fill="#ffffff" stroke="#00a800" stroke-width="1.0"/>
<line x1="313.38" y1="203.70" x2="313.38" y2="215.90" stroke="#00a800" stroke-width="1.3"/>
<line x1="313.38" y1="228.00" x2="313.38" y2="232.10" stroke="#00a800" stroke-width="1.3"/>
<rect x="310.18" y="216.05" width="6.40" height="11.80" fill="#000000" stroke="#00a800" stroke-width="1.15"/>
<line x1="324.82" y1="189.90" x2="324.82" y2="206.20" stroke="#00a800" stroke-width="1.3"/>
<line x1="324.82" y1="215.90" x2="324.82" y2="216.60" stroke="#00a800" stroke-width="1.3"/>
<rect x="321.62" y="206.35" width="6.40" height="9.40" fill="#000000" stroke="#00a800" stroke-width="1.15"/>
<line x1="336.26" y1="190.40" x2="336.26" y2="195.20" stroke="#00a800" stroke-width="1.3"/>
<line x1="336.26" y1="206.20" x2="336.26" y2="215.10" stroke="#00a800" stroke-width="1.3"/>
<rect x="333.06" y="195.35" width="6.40" height="10.70" fill="#000000" stroke="#00a800" stroke-width="1.15"/>
<line x1="347.70" y1="176.00" x2="347.70" y2="181.10" stroke="#00a800" stroke-width="1.3"/>
<line x1="347.70" y1="196.30" x2="347.70" y2="199.90" stroke="#00a800" stroke-width="1.3"/>
<rect x="344.50" y="181.25" width="6.40" height="14.90" fill="#000000" stroke="#00a800" stroke-width="1.15"/>
<line x1="359.14" y1="175.00" x2="359.14" y2="179.70" stroke="#00a800" stroke-width="1.3"/>
<line x1="359.14" y1="185.70" x2="359.14" y2="194.50" stroke="#00a800" stroke-width="1.3"/>
<rect x="355.84" y="179.80" width="6.60" height="5.80" fill="#ffffff" stroke="#00a800" stroke-width="1.0"/>
<line x1="370.58" y1="155.60" x2="370.58" y2="162.90" stroke="#00a800" stroke-width="1.3"/>
<line x1="370.58" y1="184.00" x2="370.58" y2="190.10" stroke="#00a800" stroke-width="1.3"/>
<rect x="367.38" y="163.05" width="6.40" height="20.80" fill="#000000" stroke="#00a800" stroke-width="1.15"/>
<line x1="382.02" y1="148.80" x2="382.02" y2="162.90" stroke="#00a800" stroke-width="1.3"/>
<line x1="382.02" y1="169.00" x2="382.02" y2="172.60" stroke="#00a800" stroke-width="1.3"/>
<rect x="378.72" y="163.00" width="6.60" height="5.90" fill="#ffffff" stroke="#00a800" stroke-width="1.0"/>
<line x1="393.46" y1="169.50" x2="393.46" y2="175.50" stroke="#00a800" stroke-width="1.3"/>
<rect x="390.26" y="163.55" width="6.40" height="5.80" fill="#000000" stroke="#00a800" stroke-width="1.15"/>
<line x1="404.90" y1="148.80" x2="404.90" y2="162.90" stroke="#00a800" stroke-width="1.3"/>
<line x1="404.90" y1="173.10" x2="404.90" y2="177.50" stroke="#00a800" stroke-width="1.3"/>
<rect x="401.60" y="163.00" width="6.60" height="10.00" fill="#ffffff" stroke="#00a800" stroke-width="1.0"/>
<line x1="416.34" y1="141.00" x2="416.34" y2="147.60" stroke="#00a800" stroke-width="1.3"/>
<line x1="416.34" y1="172.60" x2="416.34" y2="178.70" stroke="#00a800" stroke-width="1.3"/>
<rect x="413.14" y="147.75" width="6.40" height="24.70" fill="#000000" stroke="#00a800" stroke-width="1.15"/>
<line x1="427.78" y1="141.00" x2="427.78" y2="149.30" stroke="#00a800" stroke-width="1.3"/>
<line x1="427.78" y1="165.30" x2="427.78" y2="166.30" stroke="#00a800" stroke-width="1.3"/>
<rect x="424.48" y="149.40" width="6.60" height="15.80" fill="#ffffff" stroke="#00a800" stroke-width="1.0"/>
<line x1="439.22" y1="175.40" x2="439.22" y2="181.70" stroke="#00a800" stroke-width="1.3"/>
<rect x="435.92" y="165.30" width="6.60" height="10.00" fill="#ffffff" stroke="#00a800" stroke-width="1.0"/>
<line x1="450.66" y1="153.60" x2="450.66" y2="155.00" stroke="#00a800" stroke-width="1.3"/>
<line x1="450.66" y1="176.70" x2="450.66" y2="181.70" stroke="#00a800" stroke-width="1.3"/>
<rect x="447.46" y="155.15" width="6.40" height="21.40" fill="#000000" stroke="#00a800" stroke-width="1.15"/>
<line x1="462.10" y1="136.10" x2="462.10" y2="155.00" stroke="#00a800" stroke-width="1.3"/>
<line x1="462.10" y1="155.00" x2="462.10" y2="156.70" stroke="#00a800" stroke-width="1.3"/>
<line x1="458.50" y1="155.00" x2="465.70" y2="155.00" stroke="#00a800" stroke-width="1.3"/>
<line x1="473.54" y1="173.00" x2="473.54" y2="174.50" stroke="#00a800" stroke-width="1.3"/>
<rect x="470.24" y="155.10" width="6.60" height="17.80" fill="#ffffff" stroke="#00a800" stroke-width="1.0"/>
<line x1="484.98" y1="145.80" x2="484.98" y2="147.50" stroke="#00a800" stroke-width="1.3"/>
<line x1="484.98" y1="172.50" x2="484.98" y2="174.50" stroke="#00a800" stroke-width="1.3"/>
<rect x="481.78" y="147.65" width="6.40" height="24.70" fill="#000000" stroke="#00a800" stroke-width="1.15"/>
<line x1="496.42" y1="148.30" x2="496.42" y2="156.70" stroke="#00a800" stroke-width="1.3"/>
<rect x="493.22" y="135.75" width="6.40" height="12.40" fill="#000000" stroke="#00a800" stroke-width="1.15"/>
<line x1="507.86" y1="131.30" x2="507.86" y2="135.60" stroke="#00a800" stroke-width="1.3"/>
<line x1="507.86" y1="138.00" x2="507.86" y2="142.90" stroke="#00a800" stroke-width="1.3"/>
<rect x="504.56" y="135.70" width="6.60" height="2.20" fill="#ffffff" stroke="#00a800" stroke-width="1.0"/>
<line x1="519.30" y1="109.80" x2="519.30" y2="112.20" stroke="#00a800" stroke-width="1.3"/>
<rect x="516.10" y="112.35" width="6.40" height="26.40" fill="#000000" stroke="#00a800" stroke-width="1.15"/>
<line x1="530.74" y1="104.40" x2="530.74" y2="109.30" stroke="#00a800" stroke-width="1.3"/>
<line x1="530.74" y1="112.20" x2="530.74" y2="121.90" stroke="#00a800" stroke-width="1.3"/>
<rect x="527.54" y="109.45" width="6.40" height="2.60" fill="#000000" stroke="#00a800" stroke-width="1.15"/>
<line x1="542.18" y1="116.60" x2="542.18" y2="131.60" stroke="#00a800" stroke-width="1.3"/>
<rect x="538.88" y="109.40" width="6.60" height="7.10" fill="#ffffff" stroke="#00a800" stroke-width="1.0"/>
<line x1="553.62" y1="104.40" x2="553.62" y2="118.30" stroke="#00a800" stroke-width="1.3"/>
<line x1="553.62" y1="120.70" x2="553.62" y2="122.60" stroke="#00a800" stroke-width="1.3"/>
<rect x="550.32" y="118.40" width="6.60" height="2.20" fill="#ffffff" stroke="#00a800" stroke-width="1.0"/>
<line x1="565.06" y1="113.60" x2="565.06" y2="122.10" stroke="#00a800" stroke-width="1.3"/>
<line x1="565.06" y1="122.10" x2="565.06" y2="128.70" stroke="#00a800" stroke-width="1.3"/>
<line x1="561.46" y1="122.10" x2="568.66" y2="122.10" stroke="#00a800" stroke-width="1.3"/>
<line x1="576.50" y1="112.20" x2="576.50" y2="113.40" stroke="#00a800" stroke-width="1.3"/>
<line x1="576.50" y1="120.90" x2="576.50" y2="128.20" stroke="#00a800" stroke-width="1.3"/>
<rect x="573.30" y="113.55" width="6.40" height="7.20" fill="#000000" stroke="#00a800" stroke-width="1.15"/>
<line x1="587.94" y1="95.90" x2="587.94" y2="98.80" stroke="#00a800" stroke-width="1.3"/>
<rect x="584.74" y="98.95" width="6.40" height="14.50" fill="#000000" stroke="#00a800" stroke-width="1.15"/>
<line x1="599.38" y1="95.90" x2="599.38" y2="98.30" stroke="#00a800" stroke-width="1.3"/>
<line x1="599.38" y1="114.10" x2="599.38" y2="118.30" stroke="#00a800" stroke-width="1.3"/>
<rect x="596.08" y="98.40" width="6.60" height="15.60" fill="#ffffff" stroke="#00a800" stroke-width="1.0"/>
<line x1="610.82" y1="106.40" x2="610.82" y2="111.70" stroke="#00a800" stroke-width="1.3"/>
<line x1="610.82" y1="116.10" x2="610.82" y2="118.50" stroke="#00a800" stroke-width="1.3"/>
<rect x="607.62" y="111.85" width="6.40" height="4.10" fill="#000000" stroke="#00a800" stroke-width="1.15"/>
<line x1="622.26" y1="134.80" x2="622.26" y2="138.90" stroke="#00a800" stroke-width="1.3"/>
<rect x="618.96" y="110.60" width="6.60" height="24.10" fill="#ffffff" stroke="#00a800" stroke-width="1.0"/>
<line x1="633.70" y1="123.80" x2="633.70" y2="127.50" stroke="#00a800" stroke-width="1.3"/>
<line x1="633.70" y1="136.50" x2="633.70" y2="138.40" stroke="#00a800" stroke-width="1.3"/>
<rect x="630.50" y="127.65" width="6.40" height="8.70" fill="#000000" stroke="#00a800" stroke-width="1.15"/>
<line x1="645.14" y1="123.80" x2="645.14" y2="128.70" stroke="#00a800" stroke-width="1.3"/>
<line x1="645.14" y1="128.70" x2="645.14" y2="136.50" stroke="#00a800" stroke-width="1.3"/>
<line x1="641.54" y1="128.70" x2="648.74" y2="128.70" stroke="#00a800" stroke-width="1.3"/>
<line x1="656.58" y1="109.30" x2="656.58" y2="120.70" stroke="#00a800" stroke-width="1.3"/>
<line x1="656.58" y1="125.80" x2="656.58" y2="131.60" stroke="#00a800" stroke-width="1.3"/>
<rect x="653.38" y="120.85" width="6.40" height="4.80" fill="#000000" stroke="#00a800" stroke-width="1.15"/>
<line x1="668.02" y1="114.10" x2="668.02" y2="120.70" stroke="#00a800" stroke-width="1.3"/>
<rect x="664.72" y="120.80" width="6.60" height="17.00" fill="#ffffff" stroke="#00a800" stroke-width="1.0"/>
<line x1="679.46" y1="131.60" x2="679.46" y2="136.50" stroke="#00a800" stroke-width="1.3"/>
<line x1="679.46" y1="145.70" x2="679.46" y2="148.60" stroke="#00a800" stroke-width="1.3"/>
<rect x="676.16" y="136.60" width="6.60" height="9.00" fill="#ffffff" stroke="#00a800" stroke-width="1.0"/>
<line x1="690.90" y1="138.90" x2="690.90" y2="143.30" stroke="#00a800" stroke-width="1.3"/>
<line x1="690.90" y1="146.20" x2="690.90" y2="162.20" stroke="#00a800" stroke-width="1.3"/>
<rect x="687.70" y="143.45" width="6.40" height="2.60" fill="#000000" stroke="#00a800" stroke-width="1.15"/>
<line x1="702.34" y1="136.50" x2="702.34" y2="143.30" stroke="#00a800" stroke-width="1.3"/>
<rect x="699.04" y="143.40" width="6.60" height="27.20" fill="#ffffff" stroke="#00a800" stroke-width="1.0"/>
<line x1="713.78" y1="159.80" x2="713.78" y2="161.50" stroke="#00a800" stroke-width="1.3"/>
<line x1="713.78" y1="170.00" x2="713.78" y2="177.20" stroke="#00a800" stroke-width="1.3"/>
<rect x="710.58" y="161.65" width="6.40" height="8.20" fill="#000000" stroke="#00a800" stroke-width="1.15"/>
<line x1="725.22" y1="136.00" x2="725.22" y2="137.90" stroke="#00a800" stroke-width="1.3"/>
<line x1="725.22" y1="161.50" x2="725.22" y2="165.10" stroke="#00a800" stroke-width="1.3"/>
<rect x="722.02" y="138.05" width="6.40" height="23.30" fill="#000000" stroke="#00a800" stroke-width="1.15"/>
<line x1="736.66" y1="125.00" x2="736.66" y2="138.90" stroke="#00a800" stroke-width="1.3"/>
<line x1="736.66" y1="142.80" x2="736.66" y2="152.50" stroke="#00a800" stroke-width="1.3"/>
<rect x="733.36" y="139.00" width="6.60" height="3.70" fill="#ffffff" stroke="#00a800" stroke-width="1.0"/>
<line x1="748.10" y1="141.30" x2="748.10" y2="145.20" stroke="#00a800" stroke-width="1.3"/>
<line x1="748.10" y1="163.20" x2="748.10" y2="169.50" stroke="#00a800" stroke-width="1.3"/>
<rect x="744.80" y="145.30" width="6.60" height="17.80" fill="#ffffff" stroke="#00a800" stroke-width="1.0"/>
<line x1="759.54" y1="137.90" x2="759.54" y2="151.00" stroke="#00a800" stroke-width="1.3"/>
<line x1="759.54" y1="163.20" x2="759.54" y2="165.60" stroke="#00a800" stroke-width="1.3"/>
<rect x="756.34" y="151.15" width="6.40" height="11.90" fill="#000000" stroke="#00a800" stroke-width="1.15"/>
<line x1="770.98" y1="140.80" x2="770.98" y2="150.00" stroke="#00a800" stroke-width="1.3"/>
<line x1="770.98" y1="150.00" x2="770.98" y2="152.50" stroke="#00a800" stroke-width="1.3"/>
<line x1="767.38" y1="150.00" x2="774.58" y2="150.00" stroke="#00a800" stroke-width="1.3"/>
<line x1="782.42" y1="145.00" x2="782.42" y2="150.20" stroke="#00a800" stroke-width="1.3"/>
<rect x="779.12" y="150.30" width="6.60" height="3.70" fill="#ffffff" stroke="#00a800" stroke-width="1.0"/>
<line x1="793.86" y1="136.30" x2="793.86" y2="139.50" stroke="#00a800" stroke-width="1.3"/>
<line x1="793.86" y1="155.20" x2="793.86" y2="157.20" stroke="#00a800" stroke-width="1.3"/>
<rect x="790.66" y="139.65" width="6.40" height="15.40" fill="#000000" stroke="#00a800" stroke-width="1.15"/>
<line x1="805.30" y1="129.80" x2="805.30" y2="136.30" stroke="#00a800" stroke-width="1.3"/>
<line x1="805.30" y1="138.70" x2="805.30" y2="148.00" stroke="#00a800" stroke-width="1.3"/>
<rect x="802.10" y="136.45" width="6.40" height="2.10" fill="#000000" stroke="#00a800" stroke-width="1.15"/>
<line x1="816.74" y1="148.00" x2="816.74" y2="158.90" stroke="#00a800" stroke-width="1.3"/>
<rect x="813.44" y="136.40" width="6.60" height="11.50" fill="#ffffff" stroke="#00a800" stroke-width="1.0"/>
<line x1="828.18" y1="129.80" x2="828.18" y2="131.00" stroke="#00a800" stroke-width="1.3"/>
<rect x="824.98" y="131.15" width="6.40" height="18.60" fill="#000000" stroke="#00a800" stroke-width="1.15"/>
<line x1="839.62" y1="131.50" x2="839.62" y2="140.70" stroke="#00a800" stroke-width="1.3"/>
<rect x="836.42" y="128.15" width="6.40" height="3.20" fill="#000000" stroke="#00a800" stroke-width="1.15"/>
<line x1="851.06" y1="124.90" x2="851.06" y2="129.80" stroke="#00a800" stroke-width="1.3"/>
<line x1="851.06" y1="137.80" x2="851.06" y2="143.10" stroke="#00a800" stroke-width="1.3"/>
<rect x="847.76" y="129.90" width="6.60" height="7.80" fill="#ffffff" stroke="#00a800" stroke-width="1.0"/>
<line x1="862.50" y1="137.80" x2="862.50" y2="139.50" stroke="#00a800" stroke-width="1.3"/>
<line x1="862.50" y1="148.00" x2="862.50" y2="154.00" stroke="#00a800" stroke-width="1.3"/>
<rect x="859.20" y="139.60" width="6.60" height="8.30" fill="#ffffff" stroke="#00a800" stroke-width="1.0"/>
<line x1="873.94" y1="124.30" x2="873.94" y2="130.50" stroke="#00a800" stroke-width="1.3"/>
<rect x="870.74" y="130.65" width="6.40" height="14.30" fill="#000000" stroke="#00a800" stroke-width="1.15"/>
<line x1="885.38" y1="120.80" x2="885.38" y2="129.80" stroke="#00a800" stroke-width="1.3"/>
<rect x="882.08" y="129.90" width="6.60" height="3.40" fill="#ffffff" stroke="#00a800" stroke-width="1.0"/>
<line x1="896.82" y1="113.50" x2="896.82" y2="114.50" stroke="#00a800" stroke-width="1.3"/>
<line x1="896.82" y1="132.20" x2="896.82" y2="135.40" stroke="#00a800" stroke-width="1.3"/>
<rect x="893.62" y="114.65" width="6.40" height="17.40" fill="#000000" stroke="#00a800" stroke-width="1.15"/>
<line x1="908.26" y1="104.30" x2="908.26" y2="116.90" stroke="#00a800" stroke-width="1.3"/>
<line x1="908.26" y1="116.90" x2="908.26" y2="118.40" stroke="#00a800" stroke-width="1.3"/>
<line x1="904.66" y1="116.90" x2="911.86" y2="116.90" stroke="#00a800" stroke-width="1.3"/>
<line x1="919.70" y1="107.90" x2="919.70" y2="112.80" stroke="#00a800" stroke-width="1.3"/>
<rect x="916.40" y="112.90" width="6.60" height="4.60" fill="#ffffff" stroke="#00a800" stroke-width="1.0"/>
<line x1="931.14" y1="109.10" x2="931.14" y2="114.50" stroke="#00a800" stroke-width="1.3"/>
<line x1="931.14" y1="116.40" x2="931.14" y2="123.20" stroke="#00a800" stroke-width="1.3"/>
<rect x="927.94" y="114.65" width="6.40" height="1.60" fill="#000000" stroke="#00a800" stroke-width="1.15"/>
<line x1="942.58" y1="109.60" x2="942.58" y2="114.70" stroke="#00a800" stroke-width="1.3"/>
<rect x="939.28" y="114.80" width="6.60" height="5.70" fill="#ffffff" stroke="#00a800" stroke-width="1.0"/>
<line x1="954.02" y1="133.40" x2="954.02" y2="143.60" stroke="#00a800" stroke-width="1.3"/>
<rect x="950.72" y="122.60" width="6.60" height="10.70" fill="#ffffff" stroke="#00a800" stroke-width="1.0"/>
<line x1="965.46" y1="132.20" x2="965.46" y2="139.50" stroke="#00a800" stroke-width="1.3"/>
<rect x="962.26" y="113.65" width="6.40" height="18.40" fill="#000000" stroke="#00a800" stroke-width="1.15"/>
</g>
<line x1="989.30" y1="78.00" x2="989.30" y2="320.60" stroke="#c8c8c8" stroke-width="1.1"/>
<line x1="3.50" y1="320.30" x2="989.80" y2="320.30" stroke="#c8c8c8" stroke-width="1.1"/>
<line x1="989.50" y1="79.30" x2="991.50" y2="79.30" stroke="#c8c8c8" stroke-width="1"/>
<text x="993.00" y="81.80" font-size="7.6" fill="#f2f2f2" text-anchor="start" font-weight="normal" textLength="23.20" lengthAdjust="spacingAndGlyphs" stroke="#f2f2f2" stroke-width="0.18">0.92860</text>
<line x1="989.50" y1="105.43" x2="991.50" y2="105.43" stroke="#c8c8c8" stroke-width="1"/>
<text x="993.00" y="107.93" font-size="7.6" fill="#f2f2f2" text-anchor="start" font-weight="normal" textLength="23.20" lengthAdjust="spacingAndGlyphs" stroke="#f2f2f2" stroke-width="0.18">0.92835</text>
<line x1="989.50" y1="131.56" x2="991.50" y2="131.56" stroke="#c8c8c8" stroke-width="1"/>
<text x="993.00" y="134.06" font-size="7.6" fill="#f2f2f2" text-anchor="start" font-weight="normal" textLength="23.20" lengthAdjust="spacingAndGlyphs" stroke="#f2f2f2" stroke-width="0.18">0.92810</text>
<line x1="989.50" y1="157.69" x2="991.50" y2="157.69" stroke="#c8c8c8" stroke-width="1"/>
<text x="993.00" y="160.19" font-size="7.6" fill="#f2f2f2" text-anchor="start" font-weight="normal" textLength="23.20" lengthAdjust="spacingAndGlyphs" stroke="#f2f2f2" stroke-width="0.18">0.92785</text>
<line x1="989.50" y1="183.82" x2="991.50" y2="183.82" stroke="#c8c8c8" stroke-width="1"/>
<text x="993.00" y="186.32" font-size="7.6" fill="#f2f2f2" text-anchor="start" font-weight="normal" textLength="23.20" lengthAdjust="spacingAndGlyphs" stroke="#f2f2f2" stroke-width="0.18">0.92760</text>
<line x1="989.50" y1="209.95" x2="991.50" y2="209.95" stroke="#c8c8c8" stroke-width="1"/>
<text x="993.00" y="212.45" font-size="7.6" fill="#f2f2f2" text-anchor="start" font-weight="normal" textLength="23.20" lengthAdjust="spacingAndGlyphs" stroke="#f2f2f2" stroke-width="0.18">0.92735</text>
<line x1="989.50" y1="236.08" x2="991.50" y2="236.08" stroke="#c8c8c8" stroke-width="1"/>
<text x="993.00" y="238.58" font-size="7.6" fill="#f2f2f2" text-anchor="start" font-weight="normal" textLength="23.20" lengthAdjust="spacingAndGlyphs" stroke="#f2f2f2" stroke-width="0.18">0.92710</text>
<line x1="989.50" y1="262.21" x2="991.50" y2="262.21" stroke="#c8c8c8" stroke-width="1"/>
<text x="993.00" y="264.71" font-size="7.6" fill="#f2f2f2" text-anchor="start" font-weight="normal" textLength="23.20" lengthAdjust="spacingAndGlyphs" stroke="#f2f2f2" stroke-width="0.18">0.92685</text>
<line x1="989.50" y1="288.34" x2="991.50" y2="288.34" stroke="#c8c8c8" stroke-width="1"/>
<text x="993.00" y="290.84" font-size="7.6" fill="#f2f2f2" text-anchor="start" font-weight="normal" textLength="23.20" lengthAdjust="spacingAndGlyphs" stroke="#f2f2f2" stroke-width="0.18">0.92660</text>
<line x1="989.50" y1="314.47" x2="991.50" y2="314.47" stroke="#c8c8c8" stroke-width="1"/>
<text x="993.00" y="316.97" font-size="7.6" fill="#f2f2f2" text-anchor="start" font-weight="normal" textLength="23.20" lengthAdjust="spacingAndGlyphs" stroke="#f2f2f2" stroke-width="0.18">0.92635</text>
<rect x="991.00" y="110.00" width="28.10" height="7.70" fill="#ffffff"/>
<text x="993.30" y="116.40" font-size="7.2" fill="#000000" text-anchor="start" font-weight="normal" textLength="22.70" lengthAdjust="spacingAndGlyphs">0.92827</text>
<rect x="991.00" y="274.00" width="27.80" height="6.80" fill="#e46cae"/>
<text x="993.00" y="280.20" font-size="7.2" fill="#111111" text-anchor="start" font-weight="normal" textLength="23.00" lengthAdjust="spacingAndGlyphs">0.92670</text>
<line x1="4.50" y1="320.50" x2="4.50" y2="323.00" stroke="#c8c8c8" stroke-width="1"/>
<text x="3.60" y="329.60" font-size="8.2" fill="#e8e8e8" text-anchor="start" font-weight="normal" textLength="31.20" lengthAdjust="spacingAndGlyphs">8 Jan 2026</text>
<line x1="50.26" y1="320.50" x2="50.26" y2="323.00" stroke="#c8c8c8" stroke-width="1"/>
<text x="49.36" y="329.60" font-size="8.2" fill="#e8e8e8" text-anchor="start" font-weight="normal" textLength="34.30" lengthAdjust="spacingAndGlyphs">8 Jan 16:20</text>
<line x1="96.02" y1="320.50" x2="96.02" y2="323.00" stroke="#c8c8c8" stroke-width="1"/>
<text x="95.12" y="329.60" font-size="8.2" fill="#e8e8e8" text-anchor="start" font-weight="normal" textLength="34.30" lengthAdjust="spacingAndGlyphs">8 Jan 16:40</text>
<line x1="141.78" y1="320.50" x2="141.78" y2="323.00" stroke="#c8c8c8" stroke-width="1"/>
<text x="140.88" y="329.60" font-size="8.2" fill="#e8e8e8" text-anchor="start" font-weight="normal" textLength="34.30" lengthAdjust="spacingAndGlyphs">8 Jan 17:00</text>
<line x1="187.54" y1="320.50" x2="187.54" y2="323.00" stroke="#c8c8c8" stroke-width="1"/>
<text x="186.64" y="329.60" font-size="8.2" fill="#e8e8e8" text-anchor="start" font-weight="normal" textLength="34.30" lengthAdjust="spacingAndGlyphs">8 Jan 17:20</text>
<line x1="233.30" y1="320.50" x2="233.30" y2="323.00" stroke="#c8c8c8" stroke-width="1"/>
<text x="232.40" y="329.60" font-size="8.2" fill="#e8e8e8" text-anchor="start" font-weight="normal" textLength="34.30" lengthAdjust="spacingAndGlyphs">8 Jan 17:40</text>
<line x1="279.06" y1="320.50" x2="279.06" y2="323.00" stroke="#c8c8c8" stroke-width="1"/>
<text x="278.16" y="329.60" font-size="8.2" fill="#e8e8e8" text-anchor="start" font-weight="normal" textLength="34.30" lengthAdjust="spacingAndGlyphs">8 Jan 18:00</text>
<line x1="324.82" y1="320.50" x2="324.82" y2="323.00" stroke="#c8c8c8" stroke-width="1"/>
<text x="323.92" y="329.60" font-size="8.2" fill="#e8e8e8" text-anchor="start" font-weight="normal" textLength="34.30" lengthAdjust="spacingAndGlyphs">8 Jan 18:20</text>
<line x1="370.58" y1="320.50" x2="370.58" y2="323.00" stroke="#c8c8c8" stroke-width="1"/>
<text x="369.68" y="329.60" font-size="8.2" fill="#e8e8e8" text-anchor="start" font-weight="normal" textLength="34.30" lengthAdjust="spacingAndGlyphs">8 Jan 18:40</text>
<line x1="416.34" y1="320.50" x2="416.34" y2="323.00" stroke="#c8c8c8" stroke-width="1"/>
<text x="415.44" y="329.60" font-size="8.2" fill="#e8e8e8" text-anchor="start" font-weight="normal" textLength="34.30" lengthAdjust="spacingAndGlyphs">8 Jan 19:00</text>
<line x1="462.10" y1="320.50" x2="462.10" y2="323.00" stroke="#c8c8c8" stroke-width="1"/>
<text x="461.20" y="329.60" font-size="8.2" fill="#e8e8e8" text-anchor="start" font-weight="normal" textLength="34.30" lengthAdjust="spacingAndGlyphs">8 Jan 19:20</text>
<line x1="507.86" y1="320.50" x2="507.86" y2="323.00" stroke="#c8c8c8" stroke-width="1"/>
<text x="506.96" y="329.60" font-size="8.2" fill="#e8e8e8" text-anchor="start" font-weight="normal" textLength="34.30" lengthAdjust="spacingAndGlyphs">8 Jan 19:40</text>
<line x1="553.62" y1="320.50" x2="553.62" y2="323.00" stroke="#c8c8c8" stroke-width="1"/>
<text x="552.72" y="329.60" font-size="8.2" fill="#e8e8e8" text-anchor="start" font-weight="normal" textLength="34.30" lengthAdjust="spacingAndGlyphs">8 Jan 20:00</text>
<line x1="599.38" y1="320.50" x2="599.38" y2="323.00" stroke="#c8c8c8" stroke-width="1"/>
<text x="598.48" y="329.60" font-size="8.2" fill="#e8e8e8" text-anchor="start" font-weight="normal" textLength="34.30" lengthAdjust="spacingAndGlyphs">8 Jan 20:20</text>
<line x1="645.14" y1="320.50" x2="645.14" y2="323.00" stroke="#c8c8c8" stroke-width="1"/>
<text x="644.24" y="329.60" font-size="8.2" fill="#e8e8e8" text-anchor="start" font-weight="normal" textLength="34.30" lengthAdjust="spacingAndGlyphs">8 Jan 20:40</text>
<line x1="690.90" y1="320.50" x2="690.90" y2="323.00" stroke="#c8c8c8" stroke-width="1"/>
<text x="690.00" y="329.60" font-size="8.2" fill="#e8e8e8" text-anchor="start" font-weight="normal" textLength="34.30" lengthAdjust="spacingAndGlyphs">8 Jan 21:00</text>
<line x1="736.66" y1="320.50" x2="736.66" y2="323.00" stroke="#c8c8c8" stroke-width="1"/>
<text x="735.76" y="329.60" font-size="8.2" fill="#e8e8e8" text-anchor="start" font-weight="normal" textLength="34.30" lengthAdjust="spacingAndGlyphs">8 Jan 21:20</text>
<line x1="782.42" y1="320.50" x2="782.42" y2="323.00" stroke="#c8c8c8" stroke-width="1"/>
<text x="781.52" y="329.60" font-size="8.2" fill="#e8e8e8" text-anchor="start" font-weight="normal" textLength="34.30" lengthAdjust="spacingAndGlyphs">8 Jan 21:40</text>
<line x1="828.18" y1="320.50" x2="828.18" y2="323.00" stroke="#c8c8c8" stroke-width="1"/>
<text x="827.28" y="329.60" font-size="8.2" fill="#e8e8e8" text-anchor="start" font-weight="normal" textLength="34.30" lengthAdjust="spacingAndGlyphs">8 Jan 22:00</text>
<line x1="873.94" y1="320.50" x2="873.94" y2="323.00" stroke="#c8c8c8" stroke-width="1"/>
<text x="873.04" y="329.60" font-size="8.2" fill="#e8e8e8" text-anchor="start" font-weight="normal" textLength="34.30" lengthAdjust="spacingAndGlyphs">8 Jan 22:20</text>
<line x1="919.70" y1="320.50" x2="919.70" y2="323.00" stroke="#c8c8c8" stroke-width="1"/>
<text x="918.80" y="329.60" font-size="8.2" fill="#e8e8e8" text-anchor="start" font-weight="normal" textLength="34.30" lengthAdjust="spacingAndGlyphs">8 Jan 22:40</text>
<line x1="965.46" y1="320.50" x2="965.46" y2="323.00" stroke="#c8c8c8" stroke-width="1"/>
<text x="964.56" y="329.60" font-size="8.2" fill="#e8e8e8" text-anchor="start" font-weight="normal" textLength="34.30" lengthAdjust="spacingAndGlyphs">8 Jan 23:00</text>
<path d="M6.2,82.9 L11.3,82.9 L8.75,85.8 Z" fill="#e8e8e8"/>
<text x="14.80" y="86.30" font-size="6.9" fill="#d8d8d8" text-anchor="start" font-weight="normal" textLength="41.50" lengthAdjust="spacingAndGlyphs">AUDCAD,M5</text>
<text x="918.60" y="87.00" font-size="6.9" fill="#d8d8d8" text-anchor="start" font-weight="normal" textLength="57.00" lengthAdjust="spacingAndGlyphs">BALANCEA_Ver.S</text>
<circle cx="981.30" cy="84.90" r="4.20" fill="#222" stroke="#bbbbbb" stroke-width="1"/>
<circle cx="979.80" cy="84.00" r="0.80" fill="#ffffff"/>
<circle cx="982.80" cy="84.00" r="0.80" fill="#ffffff"/>
<text x="44.00" y="119.30" font-size="6.9" fill="#e4e4e4" text-anchor="start" font-weight="normal" textLength="24.40" lengthAdjust="spacingAndGlyphs">sell 0.04</text>
<text x="44.00" y="211.30" font-size="6.9" fill="#e4e4e4" text-anchor="start" font-weight="normal" textLength="25.00" lengthAdjust="spacingAndGlyphs">buy 0.12</text>
<path d="M25,210 L27.8,212.8 L25,215.6 L22.2,212.8 Z" fill="#3050ff"/>
<circle cx="25.00" cy="212.80" r="0.90" fill="#a8b8ff"/>
<line x1="3.30" y1="340.30" x2="7.30" y2="344.30" stroke="#202020" stroke-width="1.2"/>
<line x1="7.30" y1="340.30" x2="3.30" y2="344.30" stroke="#202020" stroke-width="1.2"/>
<linearGradient id="bs" x1="0" x2="1" y1="0" y2="0"><stop offset="0" stop-color="#9ec0e6"/><stop offset="1" stop-color="#c6dbf2"/></linearGradient>
<rect x="1.50" y="348.50" width="9.00" height="166.80" fill="#afc9e7"/>
<text x="0.00" y="0.00" font-size="8.4" fill="#1a1a1a" text-anchor="start" font-weight="normal" textLength="31.50" lengthAdjust="spacingAndGlyphs" stroke="#1a1a1a" stroke-width="0.15" transform="translate(9.3,513.3) rotate(-90)">ターミナル</text>
<rect x="11.50" y="338.80" width="1009.00" height="161.00" fill="#ffffff" stroke="#d6d6d6" stroke-width="1"/>
<line x1="11.50" y1="356.70" x2="1020.50" y2="356.70" stroke="#e3e3e3" stroke-width="1"/>
<rect x="12.00" y="371.10" width="1008.50" height="14.20" fill="#ebebeb"/>
<rect x="12.00" y="399.40" width="1008.50" height="14.20" fill="#ebebeb"/>
<line x1="12.00" y1="371.10" x2="1020.50" y2="371.10" stroke="#dadada" stroke-width="0.8"/>
<line x1="12.00" y1="385.30" x2="1020.50" y2="385.30" stroke="#dadada" stroke-width="0.8"/>
<line x1="12.00" y1="399.40" x2="1020.50" y2="399.40" stroke="#dadada" stroke-width="0.8"/>
<line x1="12.00" y1="413.60" x2="1020.50" y2="413.60" stroke="#dadada" stroke-width="0.8"/>
<rect x="12.00" y="413.60" width="1008.50" height="14.20" fill="#c9c9c9"/>
<line x1="111.50" y1="339.00" x2="111.50" y2="413.60" stroke="#e0e0e0" stroke-width="1"/>
<line x1="248.80" y1="339.00" x2="248.80" y2="413.60" stroke="#e0e0e0" stroke-width="1"/>
<line x1="318.50" y1="339.00" x2="318.50" y2="413.60" stroke="#e0e0e0" stroke-width="1"/>
<line x1="371.80" y1="339.00" x2="371.80" y2="413.60" stroke="#e0e0e0" stroke-width="1"/>
<line x1="440.70" y1="339.00" x2="440.70" y2="413.60" stroke="#e0e0e0" stroke-width="1"/>
<line x1="516.60" y1="339.00" x2="516.60" y2="413.60" stroke="#e0e0e0" stroke-width="1"/>
<line x1="592.90" y1="339.00" x2="592.90" y2="413.60" stroke="#e0e0e0" stroke-width="1"/>
<line x1="669.70" y1="339.00" x2="669.70" y2="413.60" stroke="#e0e0e0" stroke-width="1"/>
<line x1="746.00" y1="339.00" x2="746.00" y2="413.60" stroke="#e0e0e0" stroke-width="1"/>
<line x1="822.40" y1="339.00" x2="822.40" y2="413.60" stroke="#e0e0e0" stroke-width="1"/>
<line x1="898.70" y1="339.00" x2="898.70" y2="413.60" stroke="#e0e0e0" stroke-width="1"/>
<text x="17.00" y="351.20" font-size="9.4" fill="#111111" text-anchor="start" font-weight="normal" textLength="33.00" lengthAdjust="spacingAndGlyphs" stroke="#111" stroke-width="0.12">注文番号</text>
<text x="59.20" y="351.20" font-size="7" fill="#888888" text-anchor="start" font-weight="normal" textLength="2.40" lengthAdjust="spacingAndGlyphs">/</text>
<text x="228.40" y="351.20" font-size="9.4" fill="#111111" text-anchor="start" font-weight="normal" textLength="17.30" lengthAdjust="spacingAndGlyphs" stroke="#111" stroke-width="0.12">時間</text>
<text x="281.00" y="351.20" font-size="9.4" fill="#111111" text-anchor="start" font-weight="normal" textLength="32.80" lengthAdjust="spacingAndGlyphs" stroke="#111" stroke-width="0.12">取引種別</text>
<text x="351.30" y="351.20" font-size="9.4" fill="#111111" text-anchor="start" font-weight="normal" textLength="16.70" lengthAdjust="spacingAndGlyphs" stroke="#111" stroke-width="0.12">数量</text>
<text x="405.50" y="351.20" font-size="9.4" fill="#111111" text-anchor="start" font-weight="normal" textLength="31.50" lengthAdjust="spacingAndGlyphs" stroke="#111" stroke-width="0.12">通貨ペア</text>
<text x="496.40" y="351.20" font-size="9.4" fill="#111111" text-anchor="start" font-weight="normal" textLength="16.10" lengthAdjust="spacingAndGlyphs" stroke="#111" stroke-width="0.12">価格</text>
<text x="529.00" y="351.20" font-size="9.4" fill="#111111" text-anchor="start" font-weight="normal" textLength="60.00" lengthAdjust="spacingAndGlyphs" stroke="#111" stroke-width="0.12">決済逆指値(S/L)</text>
<text x="613.00" y="351.20" font-size="9.4" fill="#111111" text-anchor="start" font-weight="normal" textLength="52.90" lengthAdjust="spacingAndGlyphs" stroke="#111" stroke-width="0.12">決済指値(T/P)</text>
<text x="726.20" y="351.20" font-size="9.4" fill="#111111" text-anchor="start" font-weight="normal" textLength="15.30" lengthAdjust="spacingAndGlyphs" stroke="#111" stroke-width="0.12">価格</text>
<text x="793.80" y="351.20" font-size="9.4" fill="#111111" text-anchor="start" font-weight="normal" textLength="25.50" lengthAdjust="spacingAndGlyphs" stroke="#111" stroke-width="0.12">手数料</text>
<text x="870.50" y="351.20" font-size="9.4" fill="#111111" text-anchor="start" font-weight="normal" textLength="26.20" lengthAdjust="spacingAndGlyphs" stroke="#111" stroke-width="0.12">スワップ</text>
<text x="999.20" y="351.20" font-size="9.4" fill="#111111" text-anchor="start" font-weight="normal" textLength="16.70" lengthAdjust="spacingAndGlyphs" stroke="#111" stroke-width="0.12">損益</text>
<text x="176.80" y="366.90" font-size="9.6" fill="#000000" text-anchor="start" font-weight="normal" textLength="70.50" lengthAdjust="spacingAndGlyphs">2026.01.07 06:15:00</text>
<text x="301.50" y="366.90" font-size="9.6" fill="#000000" text-anchor="start" font-weight="normal" textLength="14.10" lengthAdjust="spacingAndGlyphs">buy</text>
<text x="354.90" y="366.90" font-size="9.6" fill="#000000" text-anchor="start" font-weight="normal" textLength="14.90" lengthAdjust="spacingAndGlyphs">0.04</text>
<text x="410.35" y="366.90" font-size="9.6" fill="#000000" text-anchor="start" font-weight="normal" textLength="27.45" lengthAdjust="spacingAndGlyphs">audcad</text>
<text x="486.20" y="366.90" font-size="9.6" fill="#000000" text-anchor="start" font-weight="normal" textLength="27.80" lengthAdjust="spacingAndGlyphs">0.93461</text>
<text x="563.70" y="366.90" font-size="9.6" fill="#000000" text-anchor="start" font-weight="normal" textLength="27.80" lengthAdjust="spacingAndGlyphs">0.00000</text>
<text x="640.40" y="366.90" font-size="9.6" fill="#000000" text-anchor="start" font-weight="normal" textLength="27.80" lengthAdjust="spacingAndGlyphs">0.00000</text>
<text x="716.60" y="366.90" font-size="9.6" fill="#000000" text-anchor="start" font-weight="normal" textLength="27.80" lengthAdjust="spacingAndGlyphs">0.92827</text>
<text x="816.20" y="366.90" font-size="9.6" fill="#000000" text-anchor="start" font-weight="normal" textLength="4.30" lengthAdjust="spacingAndGlyphs">0</text>
<text x="889.70" y="366.90" font-size="9.6" fill="#000000" text-anchor="start" font-weight="normal" textLength="7.00" lengthAdjust="spacingAndGlyphs">-7</text>
<text x="980.60" y="366.90" font-size="9.6" fill="#000000" text-anchor="start" font-weight="normal" textLength="22.20" lengthAdjust="spacingAndGlyphs">-2 871</text>
<path d="M14.5,359.4 h5 l2.5,2.5 v8 h-7.5 z" fill="#ffffff" stroke="#6a6a6a" stroke-width="0.9"/>
<circle cx="21.70" cy="367.30" r="2.40" fill="#2a8ae0"/>
<line x1="1010.20" y1="360.90" x2="1014.60" y2="365.30" stroke="#a4a4a4" stroke-width="1.4"/>
<line x1="1014.60" y1="360.90" x2="1010.20" y2="365.30" stroke="#a4a4a4" stroke-width="1.4"/>
<text x="176.80" y="381.10" font-size="9.6" fill="#000000" text-anchor="start" font-weight="normal" textLength="70.50" lengthAdjust="spacingAndGlyphs">2026.01.07 11:03:40</text>
<text x="301.50" y="381.10" font-size="9.6" fill="#000000" text-anchor="start" font-weight="normal" textLength="14.10" lengthAdjust="spacingAndGlyphs">buy</text>
<text x="354.90" y="381.10" font-size="9.6" fill="#000000" text-anchor="start" font-weight="normal" textLength="14.90" lengthAdjust="spacingAndGlyphs">0.06</text>
<text x="410.35" y="381.10" font-size="9.6" fill="#000000" text-anchor="start" font-weight="normal" textLength="27.45" lengthAdjust="spacingAndGlyphs">audcad</text>
<text x="486.20" y="381.10" font-size="9.6" fill="#000000" text-anchor="start" font-weight="normal" textLength="27.80" lengthAdjust="spacingAndGlyphs">0.93098</text>
<text x="563.70" y="381.10" font-size="9.6" fill="#000000" text-anchor="start" font-weight="normal" textLength="27.80" lengthAdjust="spacingAndGlyphs">0.00000</text>
<text x="640.40" y="381.10" font-size="9.6" fill="#000000" text-anchor="start" font-weight="normal" textLength="27.80" lengthAdjust="spacingAndGlyphs">0.00000</text>
<text x="716.60" y="381.10" font-size="9.6" fill="#000000" text-anchor="start" font-weight="normal" textLength="27.80" lengthAdjust="spacingAndGlyphs">0.92827</text>
<text x="816.20" y="381.10" font-size="9.6" fill="#000000" text-anchor="start" font-weight="normal" textLength="4.30" lengthAdjust="spacingAndGlyphs">0</text>
<text x="885.40" y="381.10" font-size="9.6" fill="#000000" text-anchor="start" font-weight="normal" textLength="11.30" lengthAdjust="spacingAndGlyphs">-11</text>
<text x="980.60" y="381.10" font-size="9.6" fill="#000000" text-anchor="start" font-weight="normal" textLength="22.20" lengthAdjust="spacingAndGlyphs">-1 840</text>
<path d="M14.5,373.6 h5 l2.5,2.5 v8 h-7.5 z" fill="#ffffff" stroke="#6a6a6a" stroke-width="0.9"/>
<circle cx="21.70" cy="381.50" r="2.40" fill="#2a8ae0"/>
<line x1="1010.20" y1="375.10" x2="1014.60" y2="379.50" stroke="#a4a4a4" stroke-width="1.4"/>
<line x1="1014.60" y1="375.10" x2="1010.20" y2="379.50" stroke="#a4a4a4" stroke-width="1.4"/>
<text x="176.80" y="395.30" font-size="9.6" fill="#000000" text-anchor="start" font-weight="normal" textLength="70.50" lengthAdjust="spacingAndGlyphs">2026.01.08 14:20:00</text>
<text x="303.90" y="395.30" font-size="9.6" fill="#000000" text-anchor="start" font-weight="normal" textLength="11.70" lengthAdjust="spacingAndGlyphs">sell</text>
<text x="354.90" y="395.30" font-size="9.6" fill="#000000" text-anchor="start" font-weight="normal" textLength="14.90" lengthAdjust="spacingAndGlyphs">0.04</text>
<text x="410.35" y="395.30" font-size="9.6" fill="#000000" text-anchor="start" font-weight="normal" textLength="27.45" lengthAdjust="spacingAndGlyphs">audcad</text>
<text x="486.20" y="395.30" font-size="9.6" fill="#000000" text-anchor="start" font-weight="normal" textLength="27.80" lengthAdjust="spacingAndGlyphs">0.92820</text>
<text x="563.70" y="395.30" font-size="9.6" fill="#000000" text-anchor="start" font-weight="normal" textLength="27.80" lengthAdjust="spacingAndGlyphs">0.00000</text>
<text x="640.40" y="395.30" font-size="9.6" fill="#000000" text-anchor="start" font-weight="normal" textLength="27.80" lengthAdjust="spacingAndGlyphs">0.00000</text>
<text x="716.60" y="395.30" font-size="9.6" fill="#000000" text-anchor="start" font-weight="normal" textLength="27.80" lengthAdjust="spacingAndGlyphs">0.92863</text>
<text x="816.20" y="395.30" font-size="9.6" fill="#000000" text-anchor="start" font-weight="normal" textLength="4.30" lengthAdjust="spacingAndGlyphs">0</text>
<text x="892.40" y="395.30" font-size="9.6" fill="#000000" text-anchor="start" font-weight="normal" textLength="4.30" lengthAdjust="spacingAndGlyphs">0</text>
<text x="987.20" y="395.30" font-size="9.6" fill="#000000" text-anchor="start" font-weight="normal" textLength="15.60" lengthAdjust="spacingAndGlyphs">-195</text>
<path d="M14.5,387.8 h5 l2.5,2.5 v8 h-7.5 z" fill="#ffffff" stroke="#6a6a6a" stroke-width="0.9"/>
<circle cx="21.70" cy="395.70" r="2.40" fill="#e0501e"/>
<line x1="1010.20" y1="389.30" x2="1014.60" y2="393.70" stroke="#a4a4a4" stroke-width="1.4"/>
<line x1="1014.60" y1="389.30" x2="1010.20" y2="393.70" stroke="#a4a4a4" stroke-width="1.4"/>
<text x="176.80" y="409.40" font-size="9.6" fill="#000000" text-anchor="start" font-weight="normal" textLength="70.50" lengthAdjust="spacingAndGlyphs">2026.01.08 16:10:40</text>
<text x="301.50" y="409.40" font-size="9.6" fill="#000000" text-anchor="start" font-weight="normal" textLength="14.10" lengthAdjust="spacingAndGlyphs">buy</text>
<text x="354.90" y="409.40" font-size="9.6" fill="#000000" text-anchor="start" font-weight="normal" textLength="14.90" lengthAdjust="spacingAndGlyphs">0.12</text>
<text x="410.35" y="409.40" font-size="9.6" fill="#000000" text-anchor="start" font-weight="normal" textLength="27.45" lengthAdjust="spacingAndGlyphs">audcad</text>
<text x="486.20" y="409.40" font-size="9.6" fill="#000000" text-anchor="start" font-weight="normal" textLength="27.80" lengthAdjust="spacingAndGlyphs">0.92732</text>
<text x="563.70" y="409.40" font-size="9.6" fill="#000000" text-anchor="start" font-weight="normal" textLength="27.80" lengthAdjust="spacingAndGlyphs">0.00000</text>
<text x="640.40" y="409.40" font-size="9.6" fill="#000000" text-anchor="start" font-weight="normal" textLength="27.80" lengthAdjust="spacingAndGlyphs">0.00000</text>
<text x="716.60" y="409.40" font-size="9.6" fill="#000000" text-anchor="start" font-weight="normal" textLength="27.80" lengthAdjust="spacingAndGlyphs">0.92827</text>
<text x="816.20" y="409.40" font-size="9.6" fill="#000000" text-anchor="start" font-weight="normal" textLength="4.30" lengthAdjust="spacingAndGlyphs">0</text>
<text x="892.40" y="409.40" font-size="9.6" fill="#000000" text-anchor="start" font-weight="normal" textLength="4.30" lengthAdjust="spacingAndGlyphs">0</text>
<text x="983.30" y="409.40" font-size="9.6" fill="#000000" text-anchor="start" font-weight="normal" textLength="19.50" lengthAdjust="spacingAndGlyphs">1 291</text>
<path d="M14.5,401.9 h5 l2.5,2.5 v8 h-7.5 z" fill="#ffffff" stroke="#6a6a6a" stroke-width="0.9"/>
<circle cx="21.70" cy="409.80" r="2.40" fill="#2a8ae0"/>
<line x1="1010.20" y1="403.40" x2="1014.60" y2="407.80" stroke="#a4a4a4" stroke-width="1.4"/>
<line x1="1014.60" y1="403.40" x2="1010.20" y2="407.80" stroke="#a4a4a4" stroke-width="1.4"/>
<rect x="14.90" y="416.40" width="7.50" height="8.50" fill="#ffffff" stroke="#9a9a9a" stroke-width="0.8"/>
<path d="M16.6,420.1 h4 l-2,3 z" fill="#e03010"/>
<rect x="17.90" y="417.80" width="1.40" height="2.50" fill="#e03010"/>
<text x="28.00" y="423.80" font-size="9.4" fill="#1a1a1a" text-anchor="start" font-weight="normal" textLength="74.10" lengthAdjust="spacingAndGlyphs" stroke="#1a1a1a" stroke-width="0.45">残高: 1 083 894 JPY</text>
<text x="108.20" y="423.80" font-size="9.4" fill="#1a1a1a" text-anchor="start" font-weight="normal" textLength="82.60" lengthAdjust="spacingAndGlyphs" stroke="#1a1a1a" stroke-width="0.45">有効証拠金: 1 080 261</text>
<text x="196.00" y="423.80" font-size="9.4" fill="#1a1a1a" text-anchor="start" font-weight="normal" textLength="65.60" lengthAdjust="spacingAndGlyphs" stroke="#1a1a1a" stroke-width="0.45">必要証拠金: 1 893</text>
<text x="267.50" y="423.80" font-size="9.4" fill="#1a1a1a" text-anchor="start" font-weight="normal" textLength="83.70" lengthAdjust="spacingAndGlyphs" stroke="#1a1a1a" stroke-width="0.45">余剰証拠金: 1 078 368</text>
<text x="356.60" y="423.80" font-size="9.4" fill="#1a1a1a" text-anchor="start" font-weight="normal" textLength="97.90" lengthAdjust="spacingAndGlyphs" stroke="#1a1a1a" stroke-width="0.45">証拠金維持率: 57066.09%</text>
<text x="977.80" y="423.80" font-size="9.4" fill="#1a1a1a" text-anchor="start" font-weight="normal" textLength="25.00" lengthAdjust="spacingAndGlyphs" stroke="#1a1a1a" stroke-width="0.45">-3 633</text>
<line x1="11.50" y1="499.60" x2="1020.50" y2="499.60" stroke="#3a3a3a" stroke-width="1"/>
<path d="M13.5,499.6 v13.6 h31 v-13.6" fill="#ffffff" stroke="#3a3a3a" stroke-width="1"/>
<rect x="14.00" y="498.50" width="30.00" height="1.80" fill="#ffffff"/>
<text x="21.20" y="509.50" font-size="9.6" fill="#111111" text-anchor="start" font-weight="normal" textLength="16.00" lengthAdjust="spacingAndGlyphs" stroke="#111" stroke-width="0.2">取引</text>
<text x="52.00" y="509.40" font-size="9.6" fill="#707070" text-anchor="start" font-weight="normal" textLength="34.00" lengthAdjust="spacingAndGlyphs">運用比率</text>
<text x="101.00" y="509.40" font-size="9.6" fill="#707070" text-anchor="start" font-weight="normal" textLength="34.00" lengthAdjust="spacingAndGlyphs">口座履歴</text>
<text x="149.00" y="509.40" font-size="9.6" fill="#707070" text-anchor="start" font-weight="normal" textLength="25.00" lengthAdjust="spacingAndGlyphs">ニュース</text>
<text x="188.00" y="509.40" font-size="9.6" fill="#707070" text-anchor="start" font-weight="normal" textLength="41.00" lengthAdjust="spacingAndGlyphs">アラーム設定</text>
<text x="243.00" y="509.40" font-size="9.6" fill="#707070" text-anchor="start" font-weight="normal" textLength="47.00" lengthAdjust="spacingAndGlyphs">メールボックス</text>
<text x="307.00" y="509.40" font-size="9.6" fill="#707070" text-anchor="start" font-weight="normal" textLength="30.00" lengthAdjust="spacingAndGlyphs">マーケット</text>
<text x="363.00" y="509.40" font-size="9.6" fill="#707070" text-anchor="start" font-weight="normal" textLength="17.00" lengthAdjust="spacingAndGlyphs">記事</text>
<text x="399.00" y="509.40" font-size="9.6" fill="#707070" text-anchor="start" font-weight="normal" textLength="31.00" lengthAdjust="spacingAndGlyphs">ライブラリ</text>
<text x="444.00" y="509.40" font-size="9.6" fill="#707070" text-anchor="start" font-weight="normal" textLength="37.00" lengthAdjust="spacingAndGlyphs">エキスパート</text>
<text x="496.40" y="509.40" font-size="9.6" fill="#707070" text-anchor="start" font-weight="normal" textLength="33.40" lengthAdjust="spacingAndGlyphs">操作履歴</text>
<line x1="94.00" y1="503.00" x2="94.00" y2="512.00" stroke="#808080" stroke-width="0.9"/>
<line x1="142.00" y1="503.00" x2="142.00" y2="512.00" stroke="#808080" stroke-width="0.9"/>
<line x1="181.00" y1="503.00" x2="181.00" y2="512.00" stroke="#808080" stroke-width="0.9"/>
<line x1="236.00" y1="503.00" x2="236.00" y2="512.00" stroke="#808080" stroke-width="0.9"/>
<line x1="300.00" y1="503.00" x2="300.00" y2="512.00" stroke="#808080" stroke-width="0.9"/>
<line x1="356.00" y1="503.00" x2="356.00" y2="512.00" stroke="#808080" stroke-width="0.9"/>
<line x1="392.00" y1="503.00" x2="392.00" y2="512.00" stroke="#808080" stroke-width="0.9"/>
<line x1="437.00" y1="503.00" x2="437.00" y2="512.00" stroke="#808080" stroke-width="0.9"/>
<line x1="490.00" y1="503.00" x2="490.00" y2="512.00" stroke="#808080" stroke-width="0.9"/>
<line x1="537.40" y1="503.00" x2="537.40" y2="512.00" stroke="#808080" stroke-width="0.9"/>
<text x="290.30" y="512.30" font-size="7.6" fill="#e82020" text-anchor="start" font-weight="normal" textLength="4.00" lengthAdjust="spacingAndGlyphs" stroke="#e82020" stroke-width="0.2">6</text>
<text x="337.60" y="512.30" font-size="7.6" fill="#e82020" text-anchor="start" font-weight="normal" textLength="11.50" lengthAdjust="spacingAndGlyphs" stroke="#e82020" stroke-width="0.2">105</text>
<text x="380.30" y="512.30" font-size="7.6" fill="#e82020" text-anchor="start" font-weight="normal" textLength="4.00" lengthAdjust="spacingAndGlyphs" stroke="#e82020" stroke-width="0.2">9</text>
<line x1="1.00" y1="517.30" x2="1023.00" y2="517.30" stroke="#d4d4d4" stroke-width="1"/>
<line x1="1.00" y1="534.50" x2="1024.00" y2="534.50" stroke="#4f5866" stroke-width="1"/>
<text x="2.20" y="530.00" font-size="9.4" fill="#1a1a1a" text-anchor="start" font-weight="normal" textLength="99.50" lengthAdjust="spacingAndGlyphs">F1キーでヘルプが表示されます</text>
<line x1="515.00" y1="519.00" x2="515.00" y2="534.00" stroke="#c8c8c8" stroke-width="1"/>
<line x1="598.40" y1="519.00" x2="598.40" y2="534.00" stroke="#c8c8c8" stroke-width="1"/>
<line x1="671.70" y1="519.00" x2="671.70" y2="534.00" stroke="#c8c8c8" stroke-width="1"/>
<line x1="722.00" y1="519.00" x2="722.00" y2="534.00" stroke="#c8c8c8" stroke-width="1"/>
<line x1="772.90" y1="519.00" x2="772.90" y2="534.00" stroke="#c8c8c8" stroke-width="1"/>
<line x1="821.70" y1="519.00" x2="821.70" y2="534.00" stroke="#c8c8c8" stroke-width="1"/>
<line x1="870.50" y1="519.00" x2="870.50" y2="534.00" stroke="#c8c8c8" stroke-width="1"/>
<line x1="917.70" y1="519.00" x2="917.70" y2="534.00" stroke="#c8c8c8" stroke-width="1"/>
<text x="519.10" y="530.00" font-size="9.4" fill="#1a1a1a" text-anchor="start" font-weight="normal" textLength="28.00" lengthAdjust="spacingAndGlyphs">Default</text>
<rect x="922.00" y="521.80" width="1.30" height="9.20" fill="#2e5f8f"/>
<rect x="922.00" y="521.80" width="1.30" height="3.80" fill="#8aa020"/>
<rect x="924.10" y="521.80" width="1.30" height="9.20" fill="#2e5f8f"/>
<rect x="924.10" y="521.80" width="1.30" height="3.50" fill="#8aa020"/>
<rect x="926.20" y="521.80" width="1.30" height="9.20" fill="#2e5f8f"/>
<rect x="926.20" y="521.80" width="1.30" height="3.20" fill="#8aa020"/>
<rect x="928.30" y="521.80" width="1.30" height="9.20" fill="#2e5f8f"/>
<rect x="928.30" y="521.80" width="1.30" height="2.90" fill="#8aa020"/>
<rect x="930.40" y="521.80" width="1.30" height="9.20" fill="#2e5f8f"/>
<rect x="930.40" y="521.80" width="1.30" height="2.60" fill="#8aa020"/>
<rect x="932.50" y="521.80" width="1.30" height="9.20" fill="#2e5f8f"/>
<rect x="932.50" y="521.80" width="1.30" height="2.30" fill="#8aa020"/>
<rect x="934.60" y="521.80" width="1.30" height="9.20" fill="#2e5f8f"/>
<rect x="934.60" y="521.80" width="1.30" height="2.00" fill="#8aa020"/>
<rect x="936.70" y="521.80" width="1.30" height="9.20" fill="#2e5f8f"/>
<rect x="936.70" y="521.80" width="1.30" height="1.70" fill="#8aa020"/>
<text x="941.60" y="530.30" font-size="9.4" fill="#1a1a1a" text-anchor="start" font-weight="normal" textLength="61.40" lengthAdjust="spacingAndGlyphs">1391593/1206 kb</text>
<line x1="1022.00" y1="533.00" x2="1022.00" y2="531.00" stroke="#a0a0a0" stroke-width="0.8"/>
<line x1="1019.00" y1="533.00" x2="1022.00" y2="528.00" stroke="#a0a0a0" stroke-width="0.8"/>
<line x1="1016.00" y1="533.00" x2="1022.00" y2="525.00" stroke="#a0a0a0" stroke-width="0.8"/>
<line x1="0.50" y1="0.00" x2="0.50" y2="535.00" stroke="#4f5866" stroke-width="1"/>
<line x1="1023.50" y1="0.00" x2="1023.50" y2="535.00" stroke="#4f5866" stroke-width="1"/></svg></body></html>
